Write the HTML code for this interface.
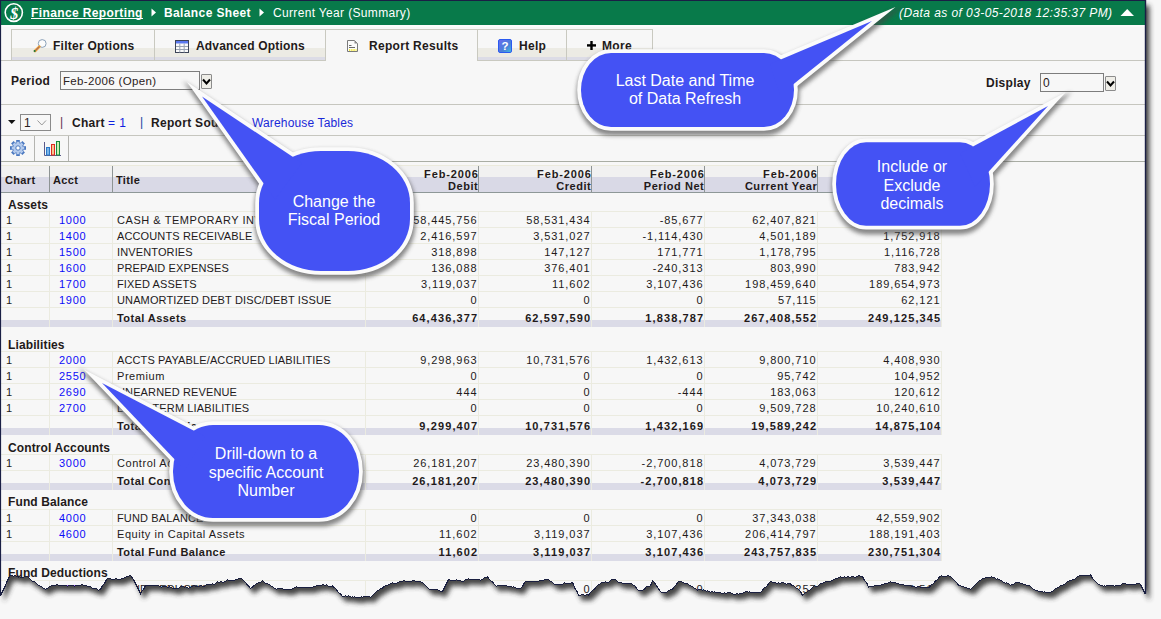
<!DOCTYPE html>
<html><head><meta charset="utf-8">
<style>
*{margin:0;padding:0;box-sizing:border-box}
html,body{width:1161px;height:619px;overflow:hidden;background:#f7f7f7;font-family:"Liberation Sans", sans-serif;color:#231a1a}
.abs{position:absolute}
#page{position:absolute;left:0;top:0;width:1161px;height:619px;clip-path:polygon(0px 0px,1146px 0px,1146px 594px,1145.5px 594.5px,1145.5px 594.5px,1144.5px 592.5px,1143.5px 590.5px,1142.5px 588.5px,1141.5px 586.5px,1140.5px 584.5px,1139.5px 583.5px,1138.5px 583.5px,1137.5px 583.5px,1136.5px 583.5px,1135.5px 584.5px,1134.5px 584.5px,1133.5px 584.5px,1132.5px 584.5px,1131.5px 584.5px,1130.5px 584.5px,1129.5px 584.5px,1128.5px 584.5px,1127.5px 584.5px,1126.5px 584.5px,1125.5px 583.5px,1124.5px 583.5px,1123.5px 583.5px,1122.5px 583.5px,1121.5px 584.5px,1120.5px 585.5px,1119.5px 585.5px,1118.5px 585.5px,1117.5px 585.5px,1116.5px 585.5px,1115.5px 585.5px,1114.5px 586.5px,1113.5px 585.5px,1112.5px 585.5px,1111.5px 585.5px,1110.5px 585.5px,1109.5px 585.5px,1108.5px 585.5px,1107.5px 585.5px,1106.5px 585.5px,1105.5px 586.5px,1104.5px 585.5px,1103.5px 586.5px,1102.5px 585.5px,1101.5px 585.5px,1100.5px 585.5px,1099.5px 584.5px,1098.5px 584.5px,1097.5px 583.5px,1096.5px 582.5px,1095.5px 581.5px,1094.5px 580.5px,1093.5px 579.5px,1092.5px 578.5px,1091.5px 576.5px,1090.5px 574.5px,1089.5px 575.5px,1088.5px 575.5px,1087.5px 575.5px,1086.5px 575.5px,1085.5px 575.5px,1084.5px 575.5px,1083.5px 575.5px,1082.5px 575.5px,1081.5px 575.5px,1080.5px 575.5px,1079.5px 575.5px,1078.5px 576.5px,1077.5px 576.5px,1076.5px 577.5px,1075.5px 578.5px,1074.5px 579.5px,1073.5px 579.5px,1072.5px 579.5px,1071.5px 580.5px,1070.5px 580.5px,1069.5px 580.5px,1068.5px 581.5px,1067.5px 581.5px,1066.5px 582.5px,1065.5px 583.5px,1064.5px 584.5px,1063.5px 584.5px,1062.5px 585.5px,1061.5px 585.5px,1060.5px 585.5px,1059.5px 586.5px,1058.5px 587.5px,1057.5px 587.5px,1056.5px 588.5px,1055.5px 588.5px,1054.5px 589.5px,1053.5px 590.5px,1052.5px 591.5px,1051.5px 591.5px,1050.5px 592.5px,1049.5px 592.5px,1048.5px 592.5px,1047.5px 592.5px,1046.5px 592.5px,1045.5px 592.5px,1044.5px 591.5px,1043.5px 592.5px,1042.5px 591.5px,1041.5px 591.5px,1040.5px 591.5px,1039.5px 591.5px,1038.5px 591.5px,1037.5px 590.5px,1036.5px 590.5px,1035.5px 590.5px,1034.5px 589.5px,1033.5px 589.5px,1032.5px 588.5px,1031.5px 587.5px,1030.5px 586.5px,1029.5px 585.5px,1028.5px 585.5px,1027.5px 585.5px,1026.5px 585.5px,1025.5px 584.5px,1024.5px 584.5px,1023.5px 584.5px,1022.5px 583.5px,1021.5px 583.5px,1020.5px 583.5px,1019.5px 582.5px,1018.5px 582.5px,1017.5px 582.5px,1016.5px 582.5px,1015.5px 582.5px,1014.5px 583.5px,1013.5px 584.5px,1012.5px 584.5px,1011.5px 584.5px,1010.5px 585.5px,1009.5px 584.5px,1008.5px 583.5px,1007.5px 583.5px,1006.5px 582.5px,1005.5px 583.5px,1004.5px 582.5px,1003.5px 582.5px,1002.5px 581.5px,1001.5px 580.5px,1000.5px 580.5px,999.5px 579.5px,998.5px 579.5px,997.5px 578.5px,996.5px 579.5px,995.5px 578.5px,994.5px 577.5px,993.5px 577.5px,992.5px 577.5px,991.5px 576.5px,990.5px 577.5px,989.5px 577.5px,988.5px 577.5px,987.5px 577.5px,986.5px 577.5px,985.5px 577.5px,984.5px 578.5px,983.5px 578.5px,982.5px 578.5px,981.5px 579.5px,980.5px 580.5px,979.5px 580.5px,978.5px 581.5px,977.5px 582.5px,976.5px 583.5px,975.5px 584.5px,974.5px 585.5px,973.5px 586.5px,972.5px 587.5px,971.5px 588.5px,970.5px 589.5px,969.5px 588.5px,968.5px 588.5px,967.5px 588.5px,966.5px 587.5px,965.5px 587.5px,964.5px 587.5px,963.5px 586.5px,962.5px 586.5px,961.5px 586.5px,960.5px 585.5px,959.5px 585.5px,958.5px 585.5px,957.5px 583.5px,956.5px 582.5px,955.5px 581.5px,954.5px 580.5px,953.5px 579.5px,952.5px 578.5px,951.5px 577.5px,950.5px 576.5px,949.5px 576.5px,948.5px 575.5px,947.5px 575.5px,946.5px 576.5px,945.5px 576.5px,944.5px 576.5px,943.5px 576.5px,942.5px 576.5px,941.5px 575.5px,940.5px 576.5px,939.5px 576.5px,938.5px 578.5px,937.5px 579.5px,936.5px 580.5px,935.5px 580.5px,934.5px 582.5px,933.5px 583.5px,932.5px 584.5px,931.5px 584.5px,930.5px 585.5px,929.5px 587.5px,928.5px 587.5px,927.5px 587.5px,926.5px 587.5px,925.5px 587.5px,924.5px 587.5px,923.5px 587.5px,922.5px 587.5px,921.5px 587.5px,920.5px 587.5px,919.5px 586.5px,918.5px 586.5px,917.5px 586.5px,916.5px 587.5px,915.5px 587.5px,914.5px 586.5px,913.5px 586.5px,912.5px 586.5px,911.5px 586.5px,910.5px 585.5px,909.5px 585.5px,908.5px 585.5px,907.5px 585.5px,906.5px 585.5px,905.5px 585.5px,904.5px 585.5px,903.5px 584.5px,902.5px 584.5px,901.5px 584.5px,900.5px 584.5px,899.5px 584.5px,898.5px 583.5px,897.5px 583.5px,896.5px 583.5px,895.5px 582.5px,894.5px 582.5px,893.5px 582.5px,892.5px 582.5px,891.5px 582.5px,890.5px 581.5px,889.5px 582.5px,888.5px 582.5px,887.5px 583.5px,886.5px 583.5px,885.5px 583.5px,884.5px 583.5px,883.5px 584.5px,882.5px 584.5px,881.5px 584.5px,880.5px 585.5px,879.5px 585.5px,878.5px 585.5px,877.5px 585.5px,876.5px 585.5px,875.5px 585.5px,874.5px 585.5px,873.5px 586.5px,872.5px 586.5px,871.5px 586.5px,870.5px 586.5px,869.5px 586.5px,868.5px 587.5px,867.5px 584.5px,866.5px 582.5px,865.5px 581.5px,864.5px 580.5px,863.5px 578.5px,862.5px 576.5px,861.5px 576.5px,860.5px 576.5px,859.5px 575.5px,858.5px 575.5px,857.5px 576.5px,856.5px 576.5px,855.5px 577.5px,854.5px 577.5px,853.5px 576.5px,852.5px 576.5px,851.5px 576.5px,850.5px 577.5px,849.5px 577.5px,848.5px 576.5px,847.5px 576.5px,846.5px 577.5px,845.5px 577.5px,844.5px 576.5px,843.5px 577.5px,842.5px 577.5px,841.5px 577.5px,840.5px 576.5px,839.5px 577.5px,838.5px 577.5px,837.5px 578.5px,836.5px 578.5px,835.5px 578.5px,834.5px 579.5px,833.5px 579.5px,832.5px 580.5px,831.5px 580.5px,830.5px 581.5px,829.5px 581.5px,828.5px 581.5px,827.5px 581.5px,826.5px 581.5px,825.5px 581.5px,824.5px 582.5px,823.5px 582.5px,822.5px 583.5px,821.5px 583.5px,820.5px 583.5px,819.5px 584.5px,818.5px 585.5px,817.5px 586.5px,816.5px 586.5px,815.5px 586.5px,814.5px 585.5px,813.5px 586.5px,812.5px 587.5px,811.5px 588.5px,810.5px 589.5px,809.5px 590.5px,808.5px 590.5px,807.5px 591.5px,806.5px 592.5px,805.5px 592.5px,804.5px 593.5px,803.5px 594.5px,802.5px 595.5px,801.5px 593.5px,800.5px 591.5px,799.5px 590.5px,798.5px 589.5px,797.5px 588.5px,796.5px 588.5px,795.5px 587.5px,794.5px 586.5px,793.5px 585.5px,792.5px 585.5px,791.5px 585.5px,790.5px 583.5px,789.5px 583.5px,788.5px 583.5px,787.5px 583.5px,786.5px 584.5px,785.5px 583.5px,784.5px 583.5px,783.5px 582.5px,782.5px 582.5px,781.5px 582.5px,780.5px 583.5px,779.5px 583.5px,778.5px 582.5px,777.5px 583.5px,776.5px 583.5px,775.5px 582.5px,774.5px 582.5px,773.5px 582.5px,772.5px 582.5px,771.5px 581.5px,770.5px 581.5px,769.5px 582.5px,768.5px 583.5px,767.5px 585.5px,766.5px 586.5px,765.5px 587.5px,764.5px 587.5px,763.5px 588.5px,762.5px 590.5px,761.5px 591.5px,760.5px 592.5px,759.5px 592.5px,758.5px 592.5px,757.5px 592.5px,756.5px 592.5px,755.5px 592.5px,754.5px 592.5px,753.5px 592.5px,752.5px 592.5px,751.5px 592.5px,750.5px 592.5px,749.5px 591.5px,748.5px 592.5px,747.5px 591.5px,746.5px 591.5px,745.5px 591.5px,744.5px 592.5px,743.5px 592.5px,742.5px 593.5px,741.5px 593.5px,740.5px 593.5px,739.5px 593.5px,738.5px 594.5px,737.5px 593.5px,736.5px 593.5px,735.5px 594.5px,734.5px 594.5px,733.5px 594.5px,732.5px 593.5px,731.5px 593.5px,730.5px 592.5px,729.5px 592.5px,728.5px 592.5px,727.5px 592.5px,726.5px 593.5px,725.5px 593.5px,724.5px 592.5px,723.5px 593.5px,722.5px 593.5px,721.5px 593.5px,720.5px 592.5px,719.5px 592.5px,718.5px 592.5px,717.5px 592.5px,716.5px 592.5px,715.5px 592.5px,714.5px 591.5px,713.5px 592.5px,712.5px 591.5px,711.5px 591.5px,710.5px 592.5px,709.5px 591.5px,708.5px 591.5px,707.5px 590.5px,706.5px 591.5px,705.5px 590.5px,704.5px 590.5px,703.5px 589.5px,702.5px 590.5px,701.5px 589.5px,700.5px 589.5px,699.5px 589.5px,698.5px 589.5px,697.5px 590.5px,696.5px 589.5px,695.5px 588.5px,694.5px 588.5px,693.5px 587.5px,692.5px 586.5px,691.5px 586.5px,690.5px 585.5px,689.5px 585.5px,688.5px 584.5px,687.5px 583.5px,686.5px 583.5px,685.5px 583.5px,684.5px 583.5px,683.5px 582.5px,682.5px 582.5px,681.5px 581.5px,680.5px 581.5px,679.5px 581.5px,678.5px 581.5px,677.5px 582.5px,676.5px 584.5px,675.5px 585.5px,674.5px 586.5px,673.5px 587.5px,672.5px 589.5px,671.5px 589.5px,670.5px 589.5px,669.5px 590.5px,668.5px 590.5px,667.5px 591.5px,666.5px 592.5px,665.5px 592.5px,664.5px 592.5px,663.5px 592.5px,662.5px 592.5px,661.5px 592.5px,660.5px 591.5px,659.5px 590.5px,658.5px 588.5px,657.5px 587.5px,656.5px 585.5px,655.5px 584.5px,654.5px 582.5px,653.5px 581.5px,652.5px 580.5px,651.5px 583.5px,650.5px 585.5px,649.5px 586.5px,648.5px 586.5px,647.5px 586.5px,646.5px 586.5px,645.5px 587.5px,644.5px 589.5px,643.5px 589.5px,642.5px 590.5px,641.5px 590.5px,640.5px 590.5px,639.5px 590.5px,638.5px 590.5px,637.5px 589.5px,636.5px 588.5px,635.5px 586.5px,634.5px 585.5px,633.5px 585.5px,632.5px 584.5px,631.5px 583.5px,630.5px 583.5px,629.5px 583.5px,628.5px 583.5px,627.5px 583.5px,626.5px 583.5px,625.5px 583.5px,624.5px 583.5px,623.5px 583.5px,622.5px 583.5px,621.5px 582.5px,620.5px 582.5px,619.5px 582.5px,618.5px 582.5px,617.5px 581.5px,616.5px 580.5px,615.5px 579.5px,614.5px 579.5px,613.5px 579.5px,612.5px 579.5px,611.5px 579.5px,610.5px 580.5px,609.5px 581.5px,608.5px 582.5px,607.5px 582.5px,606.5px 582.5px,605.5px 581.5px,604.5px 582.5px,603.5px 582.5px,602.5px 582.5px,601.5px 582.5px,600.5px 583.5px,599.5px 584.5px,598.5px 584.5px,597.5px 585.5px,596.5px 586.5px,595.5px 587.5px,594.5px 589.5px,593.5px 589.5px,592.5px 590.5px,591.5px 591.5px,590.5px 592.5px,589.5px 593.5px,588.5px 595.5px,587.5px 594.5px,586.5px 594.5px,585.5px 595.5px,584.5px 595.5px,583.5px 594.5px,582.5px 594.5px,581.5px 594.5px,580.5px 595.5px,579.5px 595.5px,578.5px 595.5px,577.5px 592.5px,576.5px 590.5px,575.5px 589.5px,574.5px 587.5px,573.5px 584.5px,572.5px 582.5px,571.5px 582.5px,570.5px 583.5px,569.5px 583.5px,568.5px 583.5px,567.5px 583.5px,566.5px 583.5px,565.5px 583.5px,564.5px 582.5px,563.5px 583.5px,562.5px 584.5px,561.5px 584.5px,560.5px 584.5px,559.5px 584.5px,558.5px 584.5px,557.5px 584.5px,556.5px 584.5px,555.5px 584.5px,554.5px 584.5px,553.5px 583.5px,552.5px 582.5px,551.5px 581.5px,550.5px 581.5px,549.5px 580.5px,548.5px 579.5px,547.5px 579.5px,546.5px 579.5px,545.5px 579.5px,544.5px 579.5px,543.5px 580.5px,542.5px 580.5px,541.5px 580.5px,540.5px 580.5px,539.5px 580.5px,538.5px 581.5px,537.5px 581.5px,536.5px 581.5px,535.5px 581.5px,534.5px 581.5px,533.5px 581.5px,532.5px 581.5px,531.5px 581.5px,530.5px 581.5px,529.5px 581.5px,528.5px 581.5px,527.5px 581.5px,526.5px 581.5px,525.5px 581.5px,524.5px 582.5px,523.5px 584.5px,522.5px 586.5px,521.5px 587.5px,520.5px 588.5px,519.5px 588.5px,518.5px 588.5px,517.5px 588.5px,516.5px 588.5px,515.5px 587.5px,514.5px 587.5px,513.5px 586.5px,512.5px 587.5px,511.5px 586.5px,510.5px 586.5px,509.5px 586.5px,508.5px 586.5px,507.5px 586.5px,506.5px 585.5px,505.5px 585.5px,504.5px 585.5px,503.5px 585.5px,502.5px 585.5px,501.5px 585.5px,500.5px 585.5px,499.5px 585.5px,498.5px 585.5px,497.5px 585.5px,496.5px 586.5px,495.5px 585.5px,494.5px 584.5px,493.5px 583.5px,492.5px 581.5px,491.5px 581.5px,490.5px 580.5px,489.5px 579.5px,488.5px 578.5px,487.5px 576.5px,486.5px 577.5px,485.5px 577.5px,484.5px 577.5px,483.5px 578.5px,482.5px 579.5px,481.5px 579.5px,480.5px 580.5px,479.5px 579.5px,478.5px 579.5px,477.5px 579.5px,476.5px 579.5px,475.5px 579.5px,474.5px 579.5px,473.5px 579.5px,472.5px 579.5px,471.5px 579.5px,470.5px 579.5px,469.5px 579.5px,468.5px 578.5px,467.5px 579.5px,466.5px 579.5px,465.5px 579.5px,464.5px 580.5px,463.5px 581.5px,462.5px 581.5px,461.5px 581.5px,460.5px 580.5px,459.5px 580.5px,458.5px 580.5px,457.5px 580.5px,456.5px 579.5px,455.5px 580.5px,454.5px 580.5px,453.5px 580.5px,452.5px 580.5px,451.5px 580.5px,450.5px 580.5px,449.5px 579.5px,448.5px 579.5px,447.5px 581.5px,446.5px 583.5px,445.5px 585.5px,444.5px 587.5px,443.5px 589.5px,442.5px 591.5px,441.5px 591.5px,440.5px 591.5px,439.5px 590.5px,438.5px 590.5px,437.5px 589.5px,436.5px 589.5px,435.5px 589.5px,434.5px 589.5px,433.5px 589.5px,432.5px 589.5px,431.5px 589.5px,430.5px 589.5px,429.5px 589.5px,428.5px 588.5px,427.5px 587.5px,426.5px 586.5px,425.5px 585.5px,424.5px 584.5px,423.5px 583.5px,422.5px 582.5px,421.5px 582.5px,420.5px 581.5px,419.5px 581.5px,418.5px 581.5px,417.5px 581.5px,416.5px 581.5px,415.5px 581.5px,414.5px 580.5px,413.5px 580.5px,412.5px 580.5px,411.5px 581.5px,410.5px 581.5px,409.5px 581.5px,408.5px 581.5px,407.5px 581.5px,406.5px 581.5px,405.5px 581.5px,404.5px 580.5px,403.5px 580.5px,402.5px 581.5px,401.5px 581.5px,400.5px 581.5px,399.5px 581.5px,398.5px 582.5px,397.5px 582.5px,396.5px 583.5px,395.5px 583.5px,394.5px 583.5px,393.5px 583.5px,392.5px 582.5px,391.5px 583.5px,390.5px 583.5px,389.5px 584.5px,388.5px 584.5px,387.5px 585.5px,386.5px 585.5px,385.5px 585.5px,384.5px 586.5px,383.5px 586.5px,382.5px 588.5px,381.5px 588.5px,380.5px 588.5px,379.5px 589.5px,378.5px 590.5px,377.5px 590.5px,376.5px 591.5px,375.5px 592.5px,374.5px 593.5px,373.5px 594.5px,372.5px 595.5px,371.5px 596.5px,370.5px 597.5px,369.5px 596.5px,368.5px 596.5px,367.5px 596.5px,366.5px 596.5px,365.5px 596.5px,364.5px 596.5px,363.5px 596.5px,362.5px 597.5px,361.5px 596.5px,360.5px 597.5px,359.5px 597.5px,358.5px 597.5px,357.5px 597.5px,356.5px 597.5px,355.5px 597.5px,354.5px 596.5px,353.5px 597.5px,352.5px 596.5px,351.5px 597.5px,350.5px 596.5px,349.5px 596.5px,348.5px 595.5px,347.5px 596.5px,346.5px 596.5px,345.5px 595.5px,344.5px 596.5px,343.5px 596.5px,342.5px 596.5px,341.5px 595.5px,340.5px 593.5px,339.5px 593.5px,338.5px 592.5px,337.5px 591.5px,336.5px 589.5px,335.5px 588.5px,334.5px 587.5px,333.5px 587.5px,332.5px 585.5px,331.5px 586.5px,330.5px 586.5px,329.5px 586.5px,328.5px 586.5px,327.5px 585.5px,326.5px 584.5px,325.5px 585.5px,324.5px 585.5px,323.5px 584.5px,322.5px 584.5px,321.5px 585.5px,320.5px 585.5px,319.5px 585.5px,318.5px 585.5px,317.5px 585.5px,316.5px 585.5px,315.5px 586.5px,314.5px 586.5px,313.5px 586.5px,312.5px 587.5px,311.5px 587.5px,310.5px 587.5px,309.5px 587.5px,308.5px 587.5px,307.5px 587.5px,306.5px 587.5px,305.5px 587.5px,304.5px 587.5px,303.5px 587.5px,302.5px 587.5px,301.5px 587.5px,300.5px 587.5px,299.5px 587.5px,298.5px 587.5px,297.5px 587.5px,296.5px 586.5px,295.5px 587.5px,294.5px 587.5px,293.5px 588.5px,292.5px 588.5px,291.5px 589.5px,290.5px 589.5px,289.5px 589.5px,288.5px 589.5px,287.5px 589.5px,286.5px 589.5px,285.5px 589.5px,284.5px 589.5px,283.5px 589.5px,282.5px 588.5px,281.5px 588.5px,280.5px 588.5px,279.5px 588.5px,278.5px 588.5px,277.5px 588.5px,276.5px 589.5px,275.5px 588.5px,274.5px 588.5px,273.5px 587.5px,272.5px 586.5px,271.5px 586.5px,270.5px 585.5px,269.5px 584.5px,268.5px 584.5px,267.5px 583.5px,266.5px 583.5px,265.5px 583.5px,264.5px 582.5px,263.5px 581.5px,262.5px 580.5px,261.5px 581.5px,260.5px 582.5px,259.5px 582.5px,258.5px 582.5px,257.5px 583.5px,256.5px 583.5px,255.5px 584.5px,254.5px 585.5px,253.5px 585.5px,252.5px 587.5px,251.5px 587.5px,250.5px 588.5px,249.5px 587.5px,248.5px 585.5px,247.5px 585.5px,246.5px 583.5px,245.5px 582.5px,244.5px 581.5px,243.5px 580.5px,242.5px 579.5px,241.5px 578.5px,240.5px 578.5px,239.5px 578.5px,238.5px 578.5px,237.5px 579.5px,236.5px 579.5px,235.5px 579.5px,234.5px 580.5px,233.5px 580.5px,232.5px 580.5px,231.5px 580.5px,230.5px 580.5px,229.5px 580.5px,228.5px 580.5px,227.5px 579.5px,226.5px 580.5px,225.5px 581.5px,224.5px 581.5px,223.5px 582.5px,222.5px 582.5px,221.5px 581.5px,220.5px 581.5px,219.5px 582.5px,218.5px 582.5px,217.5px 581.5px,216.5px 582.5px,215.5px 583.5px,214.5px 584.5px,213.5px 584.5px,212.5px 583.5px,211.5px 584.5px,210.5px 584.5px,209.5px 584.5px,208.5px 584.5px,207.5px 584.5px,206.5px 584.5px,205.5px 585.5px,204.5px 586.5px,203.5px 586.5px,202.5px 586.5px,201.5px 585.5px,200.5px 585.5px,199.5px 586.5px,198.5px 586.5px,197.5px 586.5px,196.5px 586.5px,195.5px 586.5px,194.5px 585.5px,193.5px 585.5px,192.5px 586.5px,191.5px 586.5px,190.5px 587.5px,189.5px 587.5px,188.5px 588.5px,187.5px 587.5px,186.5px 587.5px,185.5px 586.5px,184.5px 587.5px,183.5px 586.5px,182.5px 586.5px,181.5px 586.5px,180.5px 586.5px,179.5px 587.5px,178.5px 588.5px,177.5px 588.5px,176.5px 588.5px,175.5px 588.5px,174.5px 588.5px,173.5px 588.5px,172.5px 588.5px,171.5px 587.5px,170.5px 587.5px,169.5px 586.5px,168.5px 587.5px,167.5px 587.5px,166.5px 586.5px,165.5px 586.5px,164.5px 586.5px,163.5px 586.5px,162.5px 586.5px,161.5px 587.5px,160.5px 586.5px,159.5px 586.5px,158.5px 585.5px,157.5px 585.5px,156.5px 585.5px,155.5px 585.5px,154.5px 585.5px,153.5px 585.5px,152.5px 585.5px,151.5px 585.5px,150.5px 585.5px,149.5px 585.5px,148.5px 585.5px,147.5px 585.5px,146.5px 585.5px,145.5px 585.5px,144.5px 587.5px,143.5px 589.5px,142.5px 590.5px,141.5px 591.5px,140.5px 593.5px,139.5px 591.5px,138.5px 589.5px,137.5px 587.5px,136.5px 585.5px,135.5px 583.5px,134.5px 581.5px,133.5px 579.5px,132.5px 578.5px,131.5px 576.5px,130.5px 575.5px,129.5px 575.5px,128.5px 576.5px,127.5px 576.5px,126.5px 576.5px,125.5px 577.5px,124.5px 577.5px,123.5px 578.5px,122.5px 578.5px,121.5px 578.5px,120.5px 579.5px,119.5px 579.5px,118.5px 579.5px,117.5px 579.5px,116.5px 578.5px,115.5px 578.5px,114.5px 579.5px,113.5px 579.5px,112.5px 579.5px,111.5px 579.5px,110.5px 578.5px,109.5px 578.5px,108.5px 578.5px,107.5px 578.5px,106.5px 579.5px,105.5px 581.5px,104.5px 583.5px,103.5px 584.5px,102.5px 585.5px,101.5px 587.5px,100.5px 589.5px,99.5px 589.5px,98.5px 590.5px,97.5px 589.5px,96.5px 588.5px,95.5px 588.5px,94.5px 588.5px,93.5px 588.5px,92.5px 588.5px,91.5px 587.5px,90.5px 586.5px,89.5px 586.5px,88.5px 586.5px,87.5px 586.5px,86.5px 585.5px,85.5px 585.5px,84.5px 585.5px,83.5px 585.5px,82.5px 584.5px,81.5px 584.5px,80.5px 585.5px,79.5px 585.5px,78.5px 585.5px,77.5px 585.5px,76.5px 585.5px,75.5px 585.5px,74.5px 586.5px,73.5px 585.5px,72.5px 585.5px,71.5px 585.5px,70.5px 585.5px,69.5px 585.5px,68.5px 585.5px,67.5px 586.5px,66.5px 585.5px,65.5px 585.5px,64.5px 585.5px,63.5px 585.5px,62.5px 585.5px,61.5px 585.5px,60.5px 585.5px,59.5px 585.5px,58.5px 585.5px,57.5px 584.5px,56.5px 584.5px,55.5px 585.5px,54.5px 585.5px,53.5px 585.5px,52.5px 585.5px,51.5px 585.5px,50.5px 586.5px,49.5px 586.5px,48.5px 587.5px,47.5px 588.5px,46.5px 588.5px,45.5px 589.5px,44.5px 588.5px,43.5px 588.5px,42.5px 587.5px,41.5px 586.5px,40.5px 586.5px,39.5px 585.5px,38.5px 585.5px,37.5px 584.5px,36.5px 583.5px,35.5px 582.5px,34.5px 581.5px,33.5px 581.5px,32.5px 581.5px,31.5px 580.5px,30.5px 579.5px,29.5px 578.5px,28.5px 577.5px,27.5px 576.5px,26.5px 576.5px,25.5px 576.5px,24.5px 576.5px,23.5px 577.5px,22.5px 577.5px,21.5px 577.5px,20.5px 577.5px,19.5px 576.5px,18.5px 577.5px,17.5px 576.5px,16.5px 576.5px,15.5px 575.5px,14.5px 575.5px,13.5px 576.5px,12.5px 575.5px,11.5px 575.5px,10.5px 575.5px,9.5px 576.5px,8.5px 578.5px,7.5px 580.5px,6.5px 582.5px,5.5px 585.5px,4.5px 587.5px,3.5px 589.5px,2.5px 591.5px,1.5px 593.5px,0.5px 596.5px);background:#f7f7f7}
.t{position:absolute;white-space:nowrap;line-height:1}
.b{font-weight:bold}
.hl{position:absolute;height:1px}
.vl{position:absolute;width:1px}
.num{text-align:right}
</style></head><body>
<svg class="abs" style="left:0;top:0" width="1161" height="619">
<defs><filter id="pshadow" x="-5%" y="-5%" width="110%" height="110%"><feGaussianBlur stdDeviation="2.6"/></filter></defs>
<polygon points="0,0 1146,0 1146,594 1145.5,594.5 1145.5,594.5 1144.5,592.5 1143.5,590.5 1142.5,588.5 1141.5,586.5 1140.5,584.5 1139.5,583.5 1138.5,583.5 1137.5,583.5 1136.5,583.5 1135.5,584.5 1134.5,584.5 1133.5,584.5 1132.5,584.5 1131.5,584.5 1130.5,584.5 1129.5,584.5 1128.5,584.5 1127.5,584.5 1126.5,584.5 1125.5,583.5 1124.5,583.5 1123.5,583.5 1122.5,583.5 1121.5,584.5 1120.5,585.5 1119.5,585.5 1118.5,585.5 1117.5,585.5 1116.5,585.5 1115.5,585.5 1114.5,586.5 1113.5,585.5 1112.5,585.5 1111.5,585.5 1110.5,585.5 1109.5,585.5 1108.5,585.5 1107.5,585.5 1106.5,585.5 1105.5,586.5 1104.5,585.5 1103.5,586.5 1102.5,585.5 1101.5,585.5 1100.5,585.5 1099.5,584.5 1098.5,584.5 1097.5,583.5 1096.5,582.5 1095.5,581.5 1094.5,580.5 1093.5,579.5 1092.5,578.5 1091.5,576.5 1090.5,574.5 1089.5,575.5 1088.5,575.5 1087.5,575.5 1086.5,575.5 1085.5,575.5 1084.5,575.5 1083.5,575.5 1082.5,575.5 1081.5,575.5 1080.5,575.5 1079.5,575.5 1078.5,576.5 1077.5,576.5 1076.5,577.5 1075.5,578.5 1074.5,579.5 1073.5,579.5 1072.5,579.5 1071.5,580.5 1070.5,580.5 1069.5,580.5 1068.5,581.5 1067.5,581.5 1066.5,582.5 1065.5,583.5 1064.5,584.5 1063.5,584.5 1062.5,585.5 1061.5,585.5 1060.5,585.5 1059.5,586.5 1058.5,587.5 1057.5,587.5 1056.5,588.5 1055.5,588.5 1054.5,589.5 1053.5,590.5 1052.5,591.5 1051.5,591.5 1050.5,592.5 1049.5,592.5 1048.5,592.5 1047.5,592.5 1046.5,592.5 1045.5,592.5 1044.5,591.5 1043.5,592.5 1042.5,591.5 1041.5,591.5 1040.5,591.5 1039.5,591.5 1038.5,591.5 1037.5,590.5 1036.5,590.5 1035.5,590.5 1034.5,589.5 1033.5,589.5 1032.5,588.5 1031.5,587.5 1030.5,586.5 1029.5,585.5 1028.5,585.5 1027.5,585.5 1026.5,585.5 1025.5,584.5 1024.5,584.5 1023.5,584.5 1022.5,583.5 1021.5,583.5 1020.5,583.5 1019.5,582.5 1018.5,582.5 1017.5,582.5 1016.5,582.5 1015.5,582.5 1014.5,583.5 1013.5,584.5 1012.5,584.5 1011.5,584.5 1010.5,585.5 1009.5,584.5 1008.5,583.5 1007.5,583.5 1006.5,582.5 1005.5,583.5 1004.5,582.5 1003.5,582.5 1002.5,581.5 1001.5,580.5 1000.5,580.5 999.5,579.5 998.5,579.5 997.5,578.5 996.5,579.5 995.5,578.5 994.5,577.5 993.5,577.5 992.5,577.5 991.5,576.5 990.5,577.5 989.5,577.5 988.5,577.5 987.5,577.5 986.5,577.5 985.5,577.5 984.5,578.5 983.5,578.5 982.5,578.5 981.5,579.5 980.5,580.5 979.5,580.5 978.5,581.5 977.5,582.5 976.5,583.5 975.5,584.5 974.5,585.5 973.5,586.5 972.5,587.5 971.5,588.5 970.5,589.5 969.5,588.5 968.5,588.5 967.5,588.5 966.5,587.5 965.5,587.5 964.5,587.5 963.5,586.5 962.5,586.5 961.5,586.5 960.5,585.5 959.5,585.5 958.5,585.5 957.5,583.5 956.5,582.5 955.5,581.5 954.5,580.5 953.5,579.5 952.5,578.5 951.5,577.5 950.5,576.5 949.5,576.5 948.5,575.5 947.5,575.5 946.5,576.5 945.5,576.5 944.5,576.5 943.5,576.5 942.5,576.5 941.5,575.5 940.5,576.5 939.5,576.5 938.5,578.5 937.5,579.5 936.5,580.5 935.5,580.5 934.5,582.5 933.5,583.5 932.5,584.5 931.5,584.5 930.5,585.5 929.5,587.5 928.5,587.5 927.5,587.5 926.5,587.5 925.5,587.5 924.5,587.5 923.5,587.5 922.5,587.5 921.5,587.5 920.5,587.5 919.5,586.5 918.5,586.5 917.5,586.5 916.5,587.5 915.5,587.5 914.5,586.5 913.5,586.5 912.5,586.5 911.5,586.5 910.5,585.5 909.5,585.5 908.5,585.5 907.5,585.5 906.5,585.5 905.5,585.5 904.5,585.5 903.5,584.5 902.5,584.5 901.5,584.5 900.5,584.5 899.5,584.5 898.5,583.5 897.5,583.5 896.5,583.5 895.5,582.5 894.5,582.5 893.5,582.5 892.5,582.5 891.5,582.5 890.5,581.5 889.5,582.5 888.5,582.5 887.5,583.5 886.5,583.5 885.5,583.5 884.5,583.5 883.5,584.5 882.5,584.5 881.5,584.5 880.5,585.5 879.5,585.5 878.5,585.5 877.5,585.5 876.5,585.5 875.5,585.5 874.5,585.5 873.5,586.5 872.5,586.5 871.5,586.5 870.5,586.5 869.5,586.5 868.5,587.5 867.5,584.5 866.5,582.5 865.5,581.5 864.5,580.5 863.5,578.5 862.5,576.5 861.5,576.5 860.5,576.5 859.5,575.5 858.5,575.5 857.5,576.5 856.5,576.5 855.5,577.5 854.5,577.5 853.5,576.5 852.5,576.5 851.5,576.5 850.5,577.5 849.5,577.5 848.5,576.5 847.5,576.5 846.5,577.5 845.5,577.5 844.5,576.5 843.5,577.5 842.5,577.5 841.5,577.5 840.5,576.5 839.5,577.5 838.5,577.5 837.5,578.5 836.5,578.5 835.5,578.5 834.5,579.5 833.5,579.5 832.5,580.5 831.5,580.5 830.5,581.5 829.5,581.5 828.5,581.5 827.5,581.5 826.5,581.5 825.5,581.5 824.5,582.5 823.5,582.5 822.5,583.5 821.5,583.5 820.5,583.5 819.5,584.5 818.5,585.5 817.5,586.5 816.5,586.5 815.5,586.5 814.5,585.5 813.5,586.5 812.5,587.5 811.5,588.5 810.5,589.5 809.5,590.5 808.5,590.5 807.5,591.5 806.5,592.5 805.5,592.5 804.5,593.5 803.5,594.5 802.5,595.5 801.5,593.5 800.5,591.5 799.5,590.5 798.5,589.5 797.5,588.5 796.5,588.5 795.5,587.5 794.5,586.5 793.5,585.5 792.5,585.5 791.5,585.5 790.5,583.5 789.5,583.5 788.5,583.5 787.5,583.5 786.5,584.5 785.5,583.5 784.5,583.5 783.5,582.5 782.5,582.5 781.5,582.5 780.5,583.5 779.5,583.5 778.5,582.5 777.5,583.5 776.5,583.5 775.5,582.5 774.5,582.5 773.5,582.5 772.5,582.5 771.5,581.5 770.5,581.5 769.5,582.5 768.5,583.5 767.5,585.5 766.5,586.5 765.5,587.5 764.5,587.5 763.5,588.5 762.5,590.5 761.5,591.5 760.5,592.5 759.5,592.5 758.5,592.5 757.5,592.5 756.5,592.5 755.5,592.5 754.5,592.5 753.5,592.5 752.5,592.5 751.5,592.5 750.5,592.5 749.5,591.5 748.5,592.5 747.5,591.5 746.5,591.5 745.5,591.5 744.5,592.5 743.5,592.5 742.5,593.5 741.5,593.5 740.5,593.5 739.5,593.5 738.5,594.5 737.5,593.5 736.5,593.5 735.5,594.5 734.5,594.5 733.5,594.5 732.5,593.5 731.5,593.5 730.5,592.5 729.5,592.5 728.5,592.5 727.5,592.5 726.5,593.5 725.5,593.5 724.5,592.5 723.5,593.5 722.5,593.5 721.5,593.5 720.5,592.5 719.5,592.5 718.5,592.5 717.5,592.5 716.5,592.5 715.5,592.5 714.5,591.5 713.5,592.5 712.5,591.5 711.5,591.5 710.5,592.5 709.5,591.5 708.5,591.5 707.5,590.5 706.5,591.5 705.5,590.5 704.5,590.5 703.5,589.5 702.5,590.5 701.5,589.5 700.5,589.5 699.5,589.5 698.5,589.5 697.5,590.5 696.5,589.5 695.5,588.5 694.5,588.5 693.5,587.5 692.5,586.5 691.5,586.5 690.5,585.5 689.5,585.5 688.5,584.5 687.5,583.5 686.5,583.5 685.5,583.5 684.5,583.5 683.5,582.5 682.5,582.5 681.5,581.5 680.5,581.5 679.5,581.5 678.5,581.5 677.5,582.5 676.5,584.5 675.5,585.5 674.5,586.5 673.5,587.5 672.5,589.5 671.5,589.5 670.5,589.5 669.5,590.5 668.5,590.5 667.5,591.5 666.5,592.5 665.5,592.5 664.5,592.5 663.5,592.5 662.5,592.5 661.5,592.5 660.5,591.5 659.5,590.5 658.5,588.5 657.5,587.5 656.5,585.5 655.5,584.5 654.5,582.5 653.5,581.5 652.5,580.5 651.5,583.5 650.5,585.5 649.5,586.5 648.5,586.5 647.5,586.5 646.5,586.5 645.5,587.5 644.5,589.5 643.5,589.5 642.5,590.5 641.5,590.5 640.5,590.5 639.5,590.5 638.5,590.5 637.5,589.5 636.5,588.5 635.5,586.5 634.5,585.5 633.5,585.5 632.5,584.5 631.5,583.5 630.5,583.5 629.5,583.5 628.5,583.5 627.5,583.5 626.5,583.5 625.5,583.5 624.5,583.5 623.5,583.5 622.5,583.5 621.5,582.5 620.5,582.5 619.5,582.5 618.5,582.5 617.5,581.5 616.5,580.5 615.5,579.5 614.5,579.5 613.5,579.5 612.5,579.5 611.5,579.5 610.5,580.5 609.5,581.5 608.5,582.5 607.5,582.5 606.5,582.5 605.5,581.5 604.5,582.5 603.5,582.5 602.5,582.5 601.5,582.5 600.5,583.5 599.5,584.5 598.5,584.5 597.5,585.5 596.5,586.5 595.5,587.5 594.5,589.5 593.5,589.5 592.5,590.5 591.5,591.5 590.5,592.5 589.5,593.5 588.5,595.5 587.5,594.5 586.5,594.5 585.5,595.5 584.5,595.5 583.5,594.5 582.5,594.5 581.5,594.5 580.5,595.5 579.5,595.5 578.5,595.5 577.5,592.5 576.5,590.5 575.5,589.5 574.5,587.5 573.5,584.5 572.5,582.5 571.5,582.5 570.5,583.5 569.5,583.5 568.5,583.5 567.5,583.5 566.5,583.5 565.5,583.5 564.5,582.5 563.5,583.5 562.5,584.5 561.5,584.5 560.5,584.5 559.5,584.5 558.5,584.5 557.5,584.5 556.5,584.5 555.5,584.5 554.5,584.5 553.5,583.5 552.5,582.5 551.5,581.5 550.5,581.5 549.5,580.5 548.5,579.5 547.5,579.5 546.5,579.5 545.5,579.5 544.5,579.5 543.5,580.5 542.5,580.5 541.5,580.5 540.5,580.5 539.5,580.5 538.5,581.5 537.5,581.5 536.5,581.5 535.5,581.5 534.5,581.5 533.5,581.5 532.5,581.5 531.5,581.5 530.5,581.5 529.5,581.5 528.5,581.5 527.5,581.5 526.5,581.5 525.5,581.5 524.5,582.5 523.5,584.5 522.5,586.5 521.5,587.5 520.5,588.5 519.5,588.5 518.5,588.5 517.5,588.5 516.5,588.5 515.5,587.5 514.5,587.5 513.5,586.5 512.5,587.5 511.5,586.5 510.5,586.5 509.5,586.5 508.5,586.5 507.5,586.5 506.5,585.5 505.5,585.5 504.5,585.5 503.5,585.5 502.5,585.5 501.5,585.5 500.5,585.5 499.5,585.5 498.5,585.5 497.5,585.5 496.5,586.5 495.5,585.5 494.5,584.5 493.5,583.5 492.5,581.5 491.5,581.5 490.5,580.5 489.5,579.5 488.5,578.5 487.5,576.5 486.5,577.5 485.5,577.5 484.5,577.5 483.5,578.5 482.5,579.5 481.5,579.5 480.5,580.5 479.5,579.5 478.5,579.5 477.5,579.5 476.5,579.5 475.5,579.5 474.5,579.5 473.5,579.5 472.5,579.5 471.5,579.5 470.5,579.5 469.5,579.5 468.5,578.5 467.5,579.5 466.5,579.5 465.5,579.5 464.5,580.5 463.5,581.5 462.5,581.5 461.5,581.5 460.5,580.5 459.5,580.5 458.5,580.5 457.5,580.5 456.5,579.5 455.5,580.5 454.5,580.5 453.5,580.5 452.5,580.5 451.5,580.5 450.5,580.5 449.5,579.5 448.5,579.5 447.5,581.5 446.5,583.5 445.5,585.5 444.5,587.5 443.5,589.5 442.5,591.5 441.5,591.5 440.5,591.5 439.5,590.5 438.5,590.5 437.5,589.5 436.5,589.5 435.5,589.5 434.5,589.5 433.5,589.5 432.5,589.5 431.5,589.5 430.5,589.5 429.5,589.5 428.5,588.5 427.5,587.5 426.5,586.5 425.5,585.5 424.5,584.5 423.5,583.5 422.5,582.5 421.5,582.5 420.5,581.5 419.5,581.5 418.5,581.5 417.5,581.5 416.5,581.5 415.5,581.5 414.5,580.5 413.5,580.5 412.5,580.5 411.5,581.5 410.5,581.5 409.5,581.5 408.5,581.5 407.5,581.5 406.5,581.5 405.5,581.5 404.5,580.5 403.5,580.5 402.5,581.5 401.5,581.5 400.5,581.5 399.5,581.5 398.5,582.5 397.5,582.5 396.5,583.5 395.5,583.5 394.5,583.5 393.5,583.5 392.5,582.5 391.5,583.5 390.5,583.5 389.5,584.5 388.5,584.5 387.5,585.5 386.5,585.5 385.5,585.5 384.5,586.5 383.5,586.5 382.5,588.5 381.5,588.5 380.5,588.5 379.5,589.5 378.5,590.5 377.5,590.5 376.5,591.5 375.5,592.5 374.5,593.5 373.5,594.5 372.5,595.5 371.5,596.5 370.5,597.5 369.5,596.5 368.5,596.5 367.5,596.5 366.5,596.5 365.5,596.5 364.5,596.5 363.5,596.5 362.5,597.5 361.5,596.5 360.5,597.5 359.5,597.5 358.5,597.5 357.5,597.5 356.5,597.5 355.5,597.5 354.5,596.5 353.5,597.5 352.5,596.5 351.5,597.5 350.5,596.5 349.5,596.5 348.5,595.5 347.5,596.5 346.5,596.5 345.5,595.5 344.5,596.5 343.5,596.5 342.5,596.5 341.5,595.5 340.5,593.5 339.5,593.5 338.5,592.5 337.5,591.5 336.5,589.5 335.5,588.5 334.5,587.5 333.5,587.5 332.5,585.5 331.5,586.5 330.5,586.5 329.5,586.5 328.5,586.5 327.5,585.5 326.5,584.5 325.5,585.5 324.5,585.5 323.5,584.5 322.5,584.5 321.5,585.5 320.5,585.5 319.5,585.5 318.5,585.5 317.5,585.5 316.5,585.5 315.5,586.5 314.5,586.5 313.5,586.5 312.5,587.5 311.5,587.5 310.5,587.5 309.5,587.5 308.5,587.5 307.5,587.5 306.5,587.5 305.5,587.5 304.5,587.5 303.5,587.5 302.5,587.5 301.5,587.5 300.5,587.5 299.5,587.5 298.5,587.5 297.5,587.5 296.5,586.5 295.5,587.5 294.5,587.5 293.5,588.5 292.5,588.5 291.5,589.5 290.5,589.5 289.5,589.5 288.5,589.5 287.5,589.5 286.5,589.5 285.5,589.5 284.5,589.5 283.5,589.5 282.5,588.5 281.5,588.5 280.5,588.5 279.5,588.5 278.5,588.5 277.5,588.5 276.5,589.5 275.5,588.5 274.5,588.5 273.5,587.5 272.5,586.5 271.5,586.5 270.5,585.5 269.5,584.5 268.5,584.5 267.5,583.5 266.5,583.5 265.5,583.5 264.5,582.5 263.5,581.5 262.5,580.5 261.5,581.5 260.5,582.5 259.5,582.5 258.5,582.5 257.5,583.5 256.5,583.5 255.5,584.5 254.5,585.5 253.5,585.5 252.5,587.5 251.5,587.5 250.5,588.5 249.5,587.5 248.5,585.5 247.5,585.5 246.5,583.5 245.5,582.5 244.5,581.5 243.5,580.5 242.5,579.5 241.5,578.5 240.5,578.5 239.5,578.5 238.5,578.5 237.5,579.5 236.5,579.5 235.5,579.5 234.5,580.5 233.5,580.5 232.5,580.5 231.5,580.5 230.5,580.5 229.5,580.5 228.5,580.5 227.5,579.5 226.5,580.5 225.5,581.5 224.5,581.5 223.5,582.5 222.5,582.5 221.5,581.5 220.5,581.5 219.5,582.5 218.5,582.5 217.5,581.5 216.5,582.5 215.5,583.5 214.5,584.5 213.5,584.5 212.5,583.5 211.5,584.5 210.5,584.5 209.5,584.5 208.5,584.5 207.5,584.5 206.5,584.5 205.5,585.5 204.5,586.5 203.5,586.5 202.5,586.5 201.5,585.5 200.5,585.5 199.5,586.5 198.5,586.5 197.5,586.5 196.5,586.5 195.5,586.5 194.5,585.5 193.5,585.5 192.5,586.5 191.5,586.5 190.5,587.5 189.5,587.5 188.5,588.5 187.5,587.5 186.5,587.5 185.5,586.5 184.5,587.5 183.5,586.5 182.5,586.5 181.5,586.5 180.5,586.5 179.5,587.5 178.5,588.5 177.5,588.5 176.5,588.5 175.5,588.5 174.5,588.5 173.5,588.5 172.5,588.5 171.5,587.5 170.5,587.5 169.5,586.5 168.5,587.5 167.5,587.5 166.5,586.5 165.5,586.5 164.5,586.5 163.5,586.5 162.5,586.5 161.5,587.5 160.5,586.5 159.5,586.5 158.5,585.5 157.5,585.5 156.5,585.5 155.5,585.5 154.5,585.5 153.5,585.5 152.5,585.5 151.5,585.5 150.5,585.5 149.5,585.5 148.5,585.5 147.5,585.5 146.5,585.5 145.5,585.5 144.5,587.5 143.5,589.5 142.5,590.5 141.5,591.5 140.5,593.5 139.5,591.5 138.5,589.5 137.5,587.5 136.5,585.5 135.5,583.5 134.5,581.5 133.5,579.5 132.5,578.5 131.5,576.5 130.5,575.5 129.5,575.5 128.5,576.5 127.5,576.5 126.5,576.5 125.5,577.5 124.5,577.5 123.5,578.5 122.5,578.5 121.5,578.5 120.5,579.5 119.5,579.5 118.5,579.5 117.5,579.5 116.5,578.5 115.5,578.5 114.5,579.5 113.5,579.5 112.5,579.5 111.5,579.5 110.5,578.5 109.5,578.5 108.5,578.5 107.5,578.5 106.5,579.5 105.5,581.5 104.5,583.5 103.5,584.5 102.5,585.5 101.5,587.5 100.5,589.5 99.5,589.5 98.5,590.5 97.5,589.5 96.5,588.5 95.5,588.5 94.5,588.5 93.5,588.5 92.5,588.5 91.5,587.5 90.5,586.5 89.5,586.5 88.5,586.5 87.5,586.5 86.5,585.5 85.5,585.5 84.5,585.5 83.5,585.5 82.5,584.5 81.5,584.5 80.5,585.5 79.5,585.5 78.5,585.5 77.5,585.5 76.5,585.5 75.5,585.5 74.5,586.5 73.5,585.5 72.5,585.5 71.5,585.5 70.5,585.5 69.5,585.5 68.5,585.5 67.5,586.5 66.5,585.5 65.5,585.5 64.5,585.5 63.5,585.5 62.5,585.5 61.5,585.5 60.5,585.5 59.5,585.5 58.5,585.5 57.5,584.5 56.5,584.5 55.5,585.5 54.5,585.5 53.5,585.5 52.5,585.5 51.5,585.5 50.5,586.5 49.5,586.5 48.5,587.5 47.5,588.5 46.5,588.5 45.5,589.5 44.5,588.5 43.5,588.5 42.5,587.5 41.5,586.5 40.5,586.5 39.5,585.5 38.5,585.5 37.5,584.5 36.5,583.5 35.5,582.5 34.5,581.5 33.5,581.5 32.5,581.5 31.5,580.5 30.5,579.5 29.5,578.5 28.5,577.5 27.5,576.5 26.5,576.5 25.5,576.5 24.5,576.5 23.5,577.5 22.5,577.5 21.5,577.5 20.5,577.5 19.5,576.5 18.5,577.5 17.5,576.5 16.5,576.5 15.5,575.5 14.5,575.5 13.5,576.5 12.5,575.5 11.5,575.5 10.5,575.5 9.5,576.5 8.5,578.5 7.5,580.5 6.5,582.5 5.5,585.5 4.5,587.5 3.5,589.5 2.5,591.5 1.5,593.5 0.5,596.5" fill="#303030" opacity="0.9" transform="translate(3.5,5.5)" filter="url(#pshadow)"/>
</svg>
<div id="page">

<div class="abs" style="left:0;top:0;width:1146px;height:25px;background:#087a4a"></div>
<div class="abs" style="left:0;top:25px;width:1146px;height:2px;background:#fbfbfb"></div>
<svg class="abs" style="left:3px;top:2px" width="22" height="22" viewBox="0 0 22 22">
<ellipse cx="10.8" cy="10.6" rx="8.6" ry="8.8" fill="none" stroke="#fff" stroke-width="1.6"/>
<text x="11.2" y="16.5" font-family="Liberation Serif" font-weight="bold" font-style="italic" font-size="16" fill="#fff" text-anchor="middle">$</text>
</svg>
<div class="t b" style="left:31px;top:7px;font-size:12px;color:#fff;letter-spacing:0.38px">Finance Reporting</div>
<div class="abs" style="left:31px;top:18px;width:112px;height:1px;background:#fff"></div>
<svg class="abs" style="left:151px;top:8px" width="6" height="9"><polygon points="0.5,0.5 5,4.5 0.5,8.5" fill="#fff"/></svg>
<div class="t b" style="left:164px;top:7px;font-size:12px;color:#fff;letter-spacing:0.38px">Balance Sheet</div>
<svg class="abs" style="left:259px;top:8px" width="6" height="9"><polygon points="0.5,0.5 5,4.5 0.5,8.5" fill="#fff"/></svg>
<div class="t" style="left:273px;top:7px;font-size:12px;color:#fff;letter-spacing:0.34px">Current Year (Summary)</div>
<div class="t" style="left:899px;top:7px;font-size:12px;color:#fff;font-style:italic;letter-spacing:0.42px">(Data as of 03-05-2018 12:35:37 PM)</div>
<svg class="abs" style="left:1120px;top:8px" width="15" height="9"><polygon points="0.5,8 7.2,1 14,8" fill="#fff"/></svg>

<div class="hl" style="left:0;top:60px;width:1146px;background:#c6c6bf"></div>
<div class="abs" style="left:11px;top:29px;width:144px;height:32px;border:1px solid #c9c9c0;background:linear-gradient(#f7f7f7 0,#f7f7f7 18px,#ecebe4 18px,#ecebe4 27px,#dcdce6 27px,#dcdce6 30px)"></div>
<div class="abs" style="left:154px;top:29px;width:172px;height:32px;border:1px solid #c9c9c0;background:linear-gradient(#f7f7f7 0,#f7f7f7 18px,#ecebe4 18px,#ecebe4 27px,#dcdce6 27px,#dcdce6 30px)"></div>
<div class="abs" style="left:325px;top:29px;width:153px;height:32px;border:1px solid #c9c9c0;border-bottom:none;background:#f7f7f7"></div>
<div class="abs" style="left:477px;top:29px;width:90px;height:32px;border:1px solid #c9c9c0;background:linear-gradient(#f7f7f7 0,#f7f7f7 18px,#ecebe4 18px,#ecebe4 27px,#dcdce6 27px,#dcdce6 30px)"></div>
<div class="abs" style="left:566px;top:29px;width:87px;height:32px;border:1px solid #c9c9c0;background:linear-gradient(#f7f7f7 0,#f7f7f7 18px,#ecebe4 18px,#ecebe4 27px,#dcdce6 27px,#dcdce6 30px)"></div>
<svg class="abs" style="left:32px;top:37px" width="16" height="16" viewBox="0 0 16 16">
<circle cx="10.2" cy="6.5" r="3.9" fill="#fcfcfc" stroke="#8aa0b8" stroke-width="1"/>
<line x1="7.4" y1="9.6" x2="3" y2="14" stroke="#e89a30" stroke-width="2.6" stroke-linecap="round"/>
<line x1="7.2" y1="9.8" x2="3.5" y2="13.5" stroke="#8a5a8a" stroke-width="0.8"/>
<circle cx="2.6" cy="14.1" r="1" fill="#1a7a3a"/>
</svg>
<div class="t b" style="left:53px;top:40px;font-size:12px;letter-spacing:0.25px">Filter Options</div>
<svg class="abs" style="left:175px;top:40px" width="14" height="13" viewBox="0 0 14 13">
<rect x="0.5" y="0.5" width="13" height="12" fill="#fafafa" stroke="#3c4458"/>
<rect x="1" y="1" width="12" height="2.5" fill="#5a78f0"/>
<path d="M1 6.5H13M1 9.5H13M4.8 3.5V12.5M9.2 3.5V12.5" stroke="#9aa4b4" stroke-width="1"/>
</svg>
<div class="t b" style="left:196px;top:40px;font-size:12px;letter-spacing:0.17px">Advanced Options</div>
<svg class="abs" style="left:347px;top:40px" width="11" height="12" viewBox="0 0 11 12">
<path d="M0.5 0.5H7.5L10.5 3.5V11.5H0.5Z" fill="#fbfbfb" stroke="#7a7a7a"/>
<path d="M7.5 0.5V3.5H10.5Z" fill="#8a8a8a"/>
<path d="M2 5.5H4.5M2 7.5H8" stroke="#6a6a6a" stroke-width="1"/>
<path d="M2 10H9.5" stroke="#f6e800" stroke-width="1.6" stroke-dasharray="1.3 0.9"/>
</svg>
<div class="t b" style="left:369px;top:40px;font-size:12px;letter-spacing:0.3px">Report Results</div>
<svg class="abs" style="left:498px;top:39px" width="14" height="14" viewBox="0 0 14 14">
<defs><linearGradient id="hg" x1="0" y1="0" x2="1" y2="1"><stop offset="0" stop-color="#6a6af0"/><stop offset="0.6" stop-color="#4a80d8"/><stop offset="1" stop-color="#40c0e0"/></linearGradient></defs>
<rect x="0.5" y="0.5" width="13" height="13" rx="1.5" fill="url(#hg)" stroke="#2a5af0"/>
<text x="7" y="11.2" font-family="Liberation Sans" font-weight="bold" font-size="11.5" fill="#fff" text-anchor="middle">?</text>
</svg>
<div class="t b" style="left:519px;top:40px;font-size:12px;letter-spacing:0.3px">Help</div>
<svg class="abs" style="left:587px;top:41px" width="9" height="9"><rect x="0" y="3.2" width="9" height="2.4" fill="#000"/><rect x="3.3" y="0" width="2.4" height="9" fill="#000"/></svg>
<div class="t b" style="left:602px;top:40px;font-size:12px;letter-spacing:0.3px">More</div>

<div class="t b" style="left:11px;top:75px;font-size:12px;letter-spacing:0.3px">Period</div>
<div class="abs" style="left:60px;top:71px;width:140px;height:19px;border:1px solid #7d7d7d;background:#f7f7f7"></div>
<div class="t" style="left:63px;top:75.5px;font-size:11.5px;letter-spacing:0.35px;color:#2a2020">Feb-2006 (Open)</div>
<div class="abs" style="left:201px;top:74px;width:11px;height:15px;border:1px solid #8c8c8c;background:#efeee8;border-radius:1px"></div>
<svg class="abs" style="left:202px;top:77px" width="9" height="9" viewBox="0 0 9 9"><path d="M1 2.5L4.5 6.5L8 2.5" fill="none" stroke="#000" stroke-width="2"/></svg>
<div class="hl" style="left:0;top:104px;width:1146px;background:#c6c6bf"></div>
<div class="t b" style="left:986px;top:77px;font-size:12px;letter-spacing:0.3px">Display</div>
<div class="abs" style="left:1040px;top:73px;width:64px;height:19px;border:1px solid #7d7d7d;background:#f7f7f7"></div>
<div class="t" style="left:1043px;top:77px;font-size:12px;color:#2a2020">0</div>
<div class="abs" style="left:1105px;top:76px;width:11px;height:15px;border:1px solid #8c8c8c;background:#efeee8;border-radius:1px"></div>
<svg class="abs" style="left:1106px;top:79px" width="9" height="9" viewBox="0 0 9 9"><path d="M1 2.5L4.5 6.5L8 2.5" fill="none" stroke="#000" stroke-width="2"/></svg>

<svg class="abs" style="left:8px;top:120px" width="8" height="5"><polygon points="0,0 7.5,0 3.75,4" fill="#111"/></svg>
<div class="abs" style="left:20px;top:114px;width:31px;height:17px;border:1px solid #8a8a8a;background:#f7f7f7"></div>
<div class="t" style="left:24px;top:117px;font-size:12px;color:#2a2020">1</div>
<svg class="abs" style="left:37px;top:120px" width="10" height="6"><path d="M0.5 0.5L4.8 5L9 0.5" fill="none" stroke="#999" stroke-width="1"/></svg>
<div class="t" style="left:60px;top:116px;font-size:12px;color:#603050">|</div>
<div class="t b" style="left:72px;top:117px;font-size:12px;letter-spacing:0.3px">Chart</div>
<div class="t" style="left:108px;top:117px;font-size:12px;color:#1020e0;letter-spacing:0.4px">= 1</div>
<div class="t" style="left:140px;top:116px;font-size:12px;color:#1040a0">|</div>
<div class="t b" style="left:151px;top:117px;font-size:12px;letter-spacing:0.3px">Report Source</div>
<div class="t" style="left:252px;top:117px;font-size:12px;color:#1a28d8;letter-spacing:0.15px">Warehouse Tables</div>
<div class="hl" style="left:0;top:135px;width:1146px;background:#c6c6bf"></div>

<svg class="abs" style="left:9px;top:139px" width="18" height="18" viewBox="0 0 18 18">
<g transform="translate(9,9)">
<g fill="#4a78c0"><rect x="-1.8" y="-8" width="3.6" height="4" transform="rotate(0)"/><rect x="-1.8" y="-8" width="3.6" height="4" transform="rotate(45)"/><rect x="-1.8" y="-8" width="3.6" height="4" transform="rotate(90)"/><rect x="-1.8" y="-8" width="3.6" height="4" transform="rotate(135)"/><rect x="-1.8" y="-8" width="3.6" height="4" transform="rotate(180)"/><rect x="-1.8" y="-8" width="3.6" height="4" transform="rotate(225)"/><rect x="-1.8" y="-8" width="3.6" height="4" transform="rotate(270)"/><rect x="-1.8" y="-8" width="3.6" height="4" transform="rotate(315)"/><circle r="6"/></g>
<g fill="#b4caec" transform="scale(0.78)"><rect x="-1.8" y="-8" width="3.6" height="4" transform="rotate(0)"/><rect x="-1.8" y="-8" width="3.6" height="4" transform="rotate(45)"/><rect x="-1.8" y="-8" width="3.6" height="4" transform="rotate(90)"/><rect x="-1.8" y="-8" width="3.6" height="4" transform="rotate(135)"/><rect x="-1.8" y="-8" width="3.6" height="4" transform="rotate(180)"/><rect x="-1.8" y="-8" width="3.6" height="4" transform="rotate(225)"/><rect x="-1.8" y="-8" width="3.6" height="4" transform="rotate(270)"/><rect x="-1.8" y="-8" width="3.6" height="4" transform="rotate(315)"/><circle r="6"/></g>
<circle r="2.2" fill="#fff" stroke="#4a78c0" stroke-width="1"/>
</g></svg>
<div class="vl" style="left:34px;top:136px;height:25px;background:#b4b4b0"></div>
<svg class="abs" style="left:44px;top:141px" width="18" height="15" viewBox="0 0 18 15">
<path d="M0.5 1V14.5H17" fill="none" stroke="#5a5a8a" stroke-width="1"/>
<rect x="2.5" y="6.5" width="3" height="7.5" fill="#7ab4e8" stroke="#2a78c8" stroke-width="1"/>
<rect x="7.5" y="3.5" width="3" height="10.5" fill="#f4c890" stroke="#e02a20" stroke-width="1"/>
<rect x="12.5" y="0.5" width="3" height="13.5" fill="#c8f0b0" stroke="#1a8a3a" stroke-width="1"/>
</svg>
<div class="vl" style="left:68px;top:136px;height:25px;background:#b4b4b0"></div>
<div class="hl" style="left:0;top:161px;width:1146px;background:#a9ada4"></div>
<div class="hl" style="left:0;top:165px;width:941px;background:#ebeadc"></div>

<div class="abs" style="left:1px;top:166px;width:940px;height:11px;background:#f1f1f1"></div>
<div class="abs" style="left:1px;top:177px;width:940px;height:15px;background:#d9d9e6"></div>
<div class="hl" style="left:1px;top:192px;width:940px;background:#8e9898"></div>
<div class="vl" style="left:49px;top:166px;height:26px;background:#8e9494"></div>
<div class="vl" style="left:112px;top:166px;height:26px;background:#8e9494"></div>
<div class="vl" style="left:365px;top:166px;height:26px;background:#8e9494"></div>
<div class="vl" style="left:478px;top:166px;height:26px;background:#8e9494"></div>
<div class="vl" style="left:591px;top:166px;height:26px;background:#8e9494"></div>
<div class="vl" style="left:704px;top:166px;height:26px;background:#8e9494"></div>
<div class="vl" style="left:817px;top:166px;height:26px;background:#8e9494"></div>
<div class="t b" style="left:5px;top:175px;font-size:11px;letter-spacing:0.35px">Chart</div>
<div class="t b" style="left:53px;top:175px;font-size:11px;letter-spacing:0.35px">Acct</div>
<div class="t b" style="left:116px;top:175px;font-size:11px;letter-spacing:0.35px">Title</div>
<div class="t b num" style="right:682.4px;top:169px;font-size:11px;letter-spacing:0.85px">Feb-2006</div>
<div class="t b num" style="right:682.7px;top:181px;font-size:11px;letter-spacing:0.55px">Debit</div>
<div class="t b num" style="right:569.4px;top:169px;font-size:11px;letter-spacing:0.85px">Feb-2006</div>
<div class="t b num" style="right:569.7px;top:181px;font-size:11px;letter-spacing:0.55px">Credit</div>
<div class="t b num" style="right:456.4px;top:169px;font-size:11px;letter-spacing:0.85px">Feb-2006</div>
<div class="t b num" style="right:456.7px;top:181px;font-size:11px;letter-spacing:0.55px">Period Net</div>
<div class="t b num" style="right:343.4px;top:169px;font-size:11px;letter-spacing:0.85px">Feb-2006</div>
<div class="t b num" style="right:343.7px;top:181px;font-size:11px;letter-spacing:0.55px">Current Year</div>
<div class="t b num" style="right:219.4px;top:169px;font-size:11px;letter-spacing:0.85px">Feb-2006</div>
<div class="t b num" style="right:219.7px;top:181px;font-size:11px;letter-spacing:0.55px">Prior Year</div>
<div class="t b" style="left:8px;top:199px;font-size:12px;letter-spacing:0.12px">Assets</div>
<div class="hl" style="left:1px;top:211px;width:940px;background:#ebebe0"></div>
<div class="vl" style="left:49px;top:211px;height:16px;background:#ebebe0"></div>
<div class="vl" style="left:112px;top:211px;height:16px;background:#ebebe0"></div>
<div class="vl" style="left:365px;top:211px;height:16px;background:#ebebe0"></div>
<div class="vl" style="left:478px;top:211px;height:16px;background:#ebebe0"></div>
<div class="vl" style="left:591px;top:211px;height:16px;background:#ebebe0"></div>
<div class="vl" style="left:704px;top:211px;height:16px;background:#ebebe0"></div>
<div class="vl" style="left:817px;top:211px;height:16px;background:#ebebe0"></div>
<div class="vl" style="left:941px;top:211px;height:16px;background:#ebebe0"></div>
<div class="t" style="left:6px;top:215px;font-size:11px">1</div>
<div class="t" style="left:59px;top:215px;font-size:11px;color:#0c0cf8;letter-spacing:0.75px">1000</div>
<div class="t" style="left:117px;top:215px;font-size:11px;letter-spacing:0.55px">CASH &amp; TEMPORARY INVESTMENTS</div>
<div class="t num" style="right:683.5px;top:215px;font-size:11px;letter-spacing:0.93px">58,445,756</div>
<div class="t num" style="right:570.5px;top:215px;font-size:11px;letter-spacing:0.93px">58,531,434</div>
<div class="t num" style="right:457.5px;top:215px;font-size:11px;letter-spacing:0.93px">-85,677</div>
<div class="t num" style="right:344.5px;top:215px;font-size:11px;letter-spacing:0.93px">62,407,821</div>
<div class="t num" style="right:220.5px;top:215px;font-size:11px;letter-spacing:0.93px">59,521,930</div>
<div class="hl" style="left:1px;top:227px;width:940px;background:#ebebe0"></div>
<div class="vl" style="left:49px;top:227px;height:16px;background:#ebebe0"></div>
<div class="vl" style="left:112px;top:227px;height:16px;background:#ebebe0"></div>
<div class="vl" style="left:365px;top:227px;height:16px;background:#ebebe0"></div>
<div class="vl" style="left:478px;top:227px;height:16px;background:#ebebe0"></div>
<div class="vl" style="left:591px;top:227px;height:16px;background:#ebebe0"></div>
<div class="vl" style="left:704px;top:227px;height:16px;background:#ebebe0"></div>
<div class="vl" style="left:817px;top:227px;height:16px;background:#ebebe0"></div>
<div class="vl" style="left:941px;top:227px;height:16px;background:#ebebe0"></div>
<div class="t" style="left:6px;top:231px;font-size:11px">1</div>
<div class="t" style="left:59px;top:231px;font-size:11px;color:#0c0cf8;letter-spacing:0.75px">1400</div>
<div class="t" style="left:117px;top:231px;font-size:11px;letter-spacing:0.13px">ACCOUNTS RECEIVABLE</div>
<div class="t num" style="right:683.5px;top:231px;font-size:11px;letter-spacing:0.93px">2,416,597</div>
<div class="t num" style="right:570.5px;top:231px;font-size:11px;letter-spacing:0.93px">3,531,027</div>
<div class="t num" style="right:457.5px;top:231px;font-size:11px;letter-spacing:0.93px">-1,114,430</div>
<div class="t num" style="right:344.5px;top:231px;font-size:11px;letter-spacing:0.93px">4,501,189</div>
<div class="t num" style="right:220.5px;top:231px;font-size:11px;letter-spacing:0.93px">1,752,918</div>
<div class="hl" style="left:1px;top:243px;width:940px;background:#ebebe0"></div>
<div class="vl" style="left:49px;top:243px;height:16px;background:#ebebe0"></div>
<div class="vl" style="left:112px;top:243px;height:16px;background:#ebebe0"></div>
<div class="vl" style="left:365px;top:243px;height:16px;background:#ebebe0"></div>
<div class="vl" style="left:478px;top:243px;height:16px;background:#ebebe0"></div>
<div class="vl" style="left:591px;top:243px;height:16px;background:#ebebe0"></div>
<div class="vl" style="left:704px;top:243px;height:16px;background:#ebebe0"></div>
<div class="vl" style="left:817px;top:243px;height:16px;background:#ebebe0"></div>
<div class="vl" style="left:941px;top:243px;height:16px;background:#ebebe0"></div>
<div class="t" style="left:6px;top:247px;font-size:11px">1</div>
<div class="t" style="left:59px;top:247px;font-size:11px;color:#0c0cf8;letter-spacing:0.75px">1500</div>
<div class="t" style="left:117px;top:247px;font-size:11px;letter-spacing:0.13px">INVENTORIES</div>
<div class="t num" style="right:683.5px;top:247px;font-size:11px;letter-spacing:0.93px">318,898</div>
<div class="t num" style="right:570.5px;top:247px;font-size:11px;letter-spacing:0.93px">147,127</div>
<div class="t num" style="right:457.5px;top:247px;font-size:11px;letter-spacing:0.93px">171,771</div>
<div class="t num" style="right:344.5px;top:247px;font-size:11px;letter-spacing:0.93px">1,178,795</div>
<div class="t num" style="right:220.5px;top:247px;font-size:11px;letter-spacing:0.93px">1,116,728</div>
<div class="hl" style="left:1px;top:259px;width:940px;background:#ebebe0"></div>
<div class="vl" style="left:49px;top:259px;height:16px;background:#ebebe0"></div>
<div class="vl" style="left:112px;top:259px;height:16px;background:#ebebe0"></div>
<div class="vl" style="left:365px;top:259px;height:16px;background:#ebebe0"></div>
<div class="vl" style="left:478px;top:259px;height:16px;background:#ebebe0"></div>
<div class="vl" style="left:591px;top:259px;height:16px;background:#ebebe0"></div>
<div class="vl" style="left:704px;top:259px;height:16px;background:#ebebe0"></div>
<div class="vl" style="left:817px;top:259px;height:16px;background:#ebebe0"></div>
<div class="vl" style="left:941px;top:259px;height:16px;background:#ebebe0"></div>
<div class="t" style="left:6px;top:263px;font-size:11px">1</div>
<div class="t" style="left:59px;top:263px;font-size:11px;color:#0c0cf8;letter-spacing:0.75px">1600</div>
<div class="t" style="left:117px;top:263px;font-size:11px;letter-spacing:0.13px">PREPAID EXPENSES</div>
<div class="t num" style="right:683.5px;top:263px;font-size:11px;letter-spacing:0.93px">136,088</div>
<div class="t num" style="right:570.5px;top:263px;font-size:11px;letter-spacing:0.93px">376,401</div>
<div class="t num" style="right:457.5px;top:263px;font-size:11px;letter-spacing:0.93px">-240,313</div>
<div class="t num" style="right:344.5px;top:263px;font-size:11px;letter-spacing:0.93px">803,990</div>
<div class="t num" style="right:220.5px;top:263px;font-size:11px;letter-spacing:0.93px">783,942</div>
<div class="hl" style="left:1px;top:275px;width:940px;background:#ebebe0"></div>
<div class="vl" style="left:49px;top:275px;height:16px;background:#ebebe0"></div>
<div class="vl" style="left:112px;top:275px;height:16px;background:#ebebe0"></div>
<div class="vl" style="left:365px;top:275px;height:16px;background:#ebebe0"></div>
<div class="vl" style="left:478px;top:275px;height:16px;background:#ebebe0"></div>
<div class="vl" style="left:591px;top:275px;height:16px;background:#ebebe0"></div>
<div class="vl" style="left:704px;top:275px;height:16px;background:#ebebe0"></div>
<div class="vl" style="left:817px;top:275px;height:16px;background:#ebebe0"></div>
<div class="vl" style="left:941px;top:275px;height:16px;background:#ebebe0"></div>
<div class="t" style="left:6px;top:279px;font-size:11px">1</div>
<div class="t" style="left:59px;top:279px;font-size:11px;color:#0c0cf8;letter-spacing:0.75px">1700</div>
<div class="t" style="left:117px;top:279px;font-size:11px;letter-spacing:0.13px">FIXED ASSETS</div>
<div class="t num" style="right:683.5px;top:279px;font-size:11px;letter-spacing:0.93px">3,119,037</div>
<div class="t num" style="right:570.5px;top:279px;font-size:11px;letter-spacing:0.93px">11,602</div>
<div class="t num" style="right:457.5px;top:279px;font-size:11px;letter-spacing:0.93px">3,107,436</div>
<div class="t num" style="right:344.5px;top:279px;font-size:11px;letter-spacing:0.93px">198,459,640</div>
<div class="t num" style="right:220.5px;top:279px;font-size:11px;letter-spacing:0.93px">189,654,973</div>
<div class="hl" style="left:1px;top:291px;width:940px;background:#ebebe0"></div>
<div class="vl" style="left:49px;top:291px;height:16px;background:#ebebe0"></div>
<div class="vl" style="left:112px;top:291px;height:16px;background:#ebebe0"></div>
<div class="vl" style="left:365px;top:291px;height:16px;background:#ebebe0"></div>
<div class="vl" style="left:478px;top:291px;height:16px;background:#ebebe0"></div>
<div class="vl" style="left:591px;top:291px;height:16px;background:#ebebe0"></div>
<div class="vl" style="left:704px;top:291px;height:16px;background:#ebebe0"></div>
<div class="vl" style="left:817px;top:291px;height:16px;background:#ebebe0"></div>
<div class="vl" style="left:941px;top:291px;height:16px;background:#ebebe0"></div>
<div class="t" style="left:6px;top:295px;font-size:11px">1</div>
<div class="t" style="left:59px;top:295px;font-size:11px;color:#0c0cf8;letter-spacing:0.75px">1900</div>
<div class="t" style="left:117px;top:295px;font-size:11px;letter-spacing:0.13px">UNAMORTIZED DEBT DISC/DEBT ISSUE</div>
<div class="t num" style="right:683.5px;top:295px;font-size:11px;letter-spacing:0.93px">0</div>
<div class="t num" style="right:570.5px;top:295px;font-size:11px;letter-spacing:0.93px">0</div>
<div class="t num" style="right:457.5px;top:295px;font-size:11px;letter-spacing:0.93px">0</div>
<div class="t num" style="right:344.5px;top:295px;font-size:11px;letter-spacing:0.93px">57,115</div>
<div class="t num" style="right:220.5px;top:295px;font-size:11px;letter-spacing:0.93px">62,121</div>
<div class="hl" style="left:1px;top:307px;width:940px;background:#ebebe0"></div>
<div class="abs" style="left:1px;top:320px;width:940px;height:7px;background:#dbdbe7"></div>
<div class="vl" style="left:49px;top:307px;height:20px;background:#ebebe0"></div>
<div class="vl" style="left:112px;top:307px;height:20px;background:#ebebe0"></div>
<div class="vl" style="left:365px;top:307px;height:20px;background:#ebebe0"></div>
<div class="vl" style="left:478px;top:307px;height:20px;background:#ebebe0"></div>
<div class="vl" style="left:591px;top:307px;height:20px;background:#ebebe0"></div>
<div class="vl" style="left:704px;top:307px;height:20px;background:#ebebe0"></div>
<div class="vl" style="left:817px;top:307px;height:20px;background:#ebebe0"></div>
<div class="vl" style="left:941px;top:307px;height:20px;background:#ebebe0"></div>
<div class="t b" style="left:117px;top:313px;font-size:11px;letter-spacing:0.45px">Total Assets</div>
<div class="t b num" style="right:682.8px;top:313px;font-size:11px;letter-spacing:1.1px">64,436,377</div>
<div class="t b num" style="right:569.8px;top:313px;font-size:11px;letter-spacing:1.1px">62,597,590</div>
<div class="t b num" style="right:456.8px;top:313px;font-size:11px;letter-spacing:1.1px">1,838,787</div>
<div class="t b num" style="right:343.8px;top:313px;font-size:11px;letter-spacing:1.1px">267,408,552</div>
<div class="t b num" style="right:219.8px;top:313px;font-size:11px;letter-spacing:1.1px">249,125,345</div>
<div class="t b" style="left:8px;top:339px;font-size:12px;letter-spacing:0.12px">Liabilities</div>
<div class="hl" style="left:1px;top:351px;width:940px;background:#ebebe0"></div>
<div class="vl" style="left:49px;top:351px;height:16px;background:#ebebe0"></div>
<div class="vl" style="left:112px;top:351px;height:16px;background:#ebebe0"></div>
<div class="vl" style="left:365px;top:351px;height:16px;background:#ebebe0"></div>
<div class="vl" style="left:478px;top:351px;height:16px;background:#ebebe0"></div>
<div class="vl" style="left:591px;top:351px;height:16px;background:#ebebe0"></div>
<div class="vl" style="left:704px;top:351px;height:16px;background:#ebebe0"></div>
<div class="vl" style="left:817px;top:351px;height:16px;background:#ebebe0"></div>
<div class="vl" style="left:941px;top:351px;height:16px;background:#ebebe0"></div>
<div class="t" style="left:6px;top:355px;font-size:11px">1</div>
<div class="t" style="left:59px;top:355px;font-size:11px;color:#0c0cf8;letter-spacing:0.75px">2000</div>
<div class="t" style="left:117px;top:355px;font-size:11px;letter-spacing:0.13px">ACCTS PAYABLE/ACCRUED LIABILITIES</div>
<div class="t num" style="right:683.5px;top:355px;font-size:11px;letter-spacing:0.93px">9,298,963</div>
<div class="t num" style="right:570.5px;top:355px;font-size:11px;letter-spacing:0.93px">10,731,576</div>
<div class="t num" style="right:457.5px;top:355px;font-size:11px;letter-spacing:0.93px">1,432,613</div>
<div class="t num" style="right:344.5px;top:355px;font-size:11px;letter-spacing:0.93px">9,800,710</div>
<div class="t num" style="right:220.5px;top:355px;font-size:11px;letter-spacing:0.93px">4,408,930</div>
<div class="hl" style="left:1px;top:367px;width:940px;background:#ebebe0"></div>
<div class="vl" style="left:49px;top:367px;height:16px;background:#ebebe0"></div>
<div class="vl" style="left:112px;top:367px;height:16px;background:#ebebe0"></div>
<div class="vl" style="left:365px;top:367px;height:16px;background:#ebebe0"></div>
<div class="vl" style="left:478px;top:367px;height:16px;background:#ebebe0"></div>
<div class="vl" style="left:591px;top:367px;height:16px;background:#ebebe0"></div>
<div class="vl" style="left:704px;top:367px;height:16px;background:#ebebe0"></div>
<div class="vl" style="left:817px;top:367px;height:16px;background:#ebebe0"></div>
<div class="vl" style="left:941px;top:367px;height:16px;background:#ebebe0"></div>
<div class="t" style="left:6px;top:371px;font-size:11px">1</div>
<div class="t" style="left:59px;top:371px;font-size:11px;color:#0c0cf8;letter-spacing:0.75px">2550</div>
<div class="t" style="left:117px;top:371px;font-size:11px;letter-spacing:0.55px">Premium</div>
<div class="t num" style="right:683.5px;top:371px;font-size:11px;letter-spacing:0.93px">0</div>
<div class="t num" style="right:570.5px;top:371px;font-size:11px;letter-spacing:0.93px">0</div>
<div class="t num" style="right:457.5px;top:371px;font-size:11px;letter-spacing:0.93px">0</div>
<div class="t num" style="right:344.5px;top:371px;font-size:11px;letter-spacing:0.93px">95,742</div>
<div class="t num" style="right:220.5px;top:371px;font-size:11px;letter-spacing:0.93px">104,952</div>
<div class="hl" style="left:1px;top:383px;width:940px;background:#ebebe0"></div>
<div class="vl" style="left:49px;top:383px;height:16px;background:#ebebe0"></div>
<div class="vl" style="left:112px;top:383px;height:16px;background:#ebebe0"></div>
<div class="vl" style="left:365px;top:383px;height:16px;background:#ebebe0"></div>
<div class="vl" style="left:478px;top:383px;height:16px;background:#ebebe0"></div>
<div class="vl" style="left:591px;top:383px;height:16px;background:#ebebe0"></div>
<div class="vl" style="left:704px;top:383px;height:16px;background:#ebebe0"></div>
<div class="vl" style="left:817px;top:383px;height:16px;background:#ebebe0"></div>
<div class="vl" style="left:941px;top:383px;height:16px;background:#ebebe0"></div>
<div class="t" style="left:6px;top:387px;font-size:11px">1</div>
<div class="t" style="left:59px;top:387px;font-size:11px;color:#0c0cf8;letter-spacing:0.75px">2690</div>
<div class="t" style="left:117px;top:387px;font-size:11px;letter-spacing:0.13px">UNEARNED REVENUE</div>
<div class="t num" style="right:683.5px;top:387px;font-size:11px;letter-spacing:0.93px">444</div>
<div class="t num" style="right:570.5px;top:387px;font-size:11px;letter-spacing:0.93px">0</div>
<div class="t num" style="right:457.5px;top:387px;font-size:11px;letter-spacing:0.93px">-444</div>
<div class="t num" style="right:344.5px;top:387px;font-size:11px;letter-spacing:0.93px">183,063</div>
<div class="t num" style="right:220.5px;top:387px;font-size:11px;letter-spacing:0.93px">120,612</div>
<div class="hl" style="left:1px;top:399px;width:940px;background:#ebebe0"></div>
<div class="vl" style="left:49px;top:399px;height:16px;background:#ebebe0"></div>
<div class="vl" style="left:112px;top:399px;height:16px;background:#ebebe0"></div>
<div class="vl" style="left:365px;top:399px;height:16px;background:#ebebe0"></div>
<div class="vl" style="left:478px;top:399px;height:16px;background:#ebebe0"></div>
<div class="vl" style="left:591px;top:399px;height:16px;background:#ebebe0"></div>
<div class="vl" style="left:704px;top:399px;height:16px;background:#ebebe0"></div>
<div class="vl" style="left:817px;top:399px;height:16px;background:#ebebe0"></div>
<div class="vl" style="left:941px;top:399px;height:16px;background:#ebebe0"></div>
<div class="t" style="left:6px;top:403px;font-size:11px">1</div>
<div class="t" style="left:59px;top:403px;font-size:11px;color:#0c0cf8;letter-spacing:0.75px">2700</div>
<div class="t" style="left:117px;top:403px;font-size:11px;letter-spacing:0.13px">LONG-TERM LIABILITIES</div>
<div class="t num" style="right:683.5px;top:403px;font-size:11px;letter-spacing:0.93px">0</div>
<div class="t num" style="right:570.5px;top:403px;font-size:11px;letter-spacing:0.93px">0</div>
<div class="t num" style="right:457.5px;top:403px;font-size:11px;letter-spacing:0.93px">0</div>
<div class="t num" style="right:344.5px;top:403px;font-size:11px;letter-spacing:0.93px">9,509,728</div>
<div class="t num" style="right:220.5px;top:403px;font-size:11px;letter-spacing:0.93px">10,240,610</div>
<div class="hl" style="left:1px;top:415px;width:940px;background:#ebebe0"></div>
<div class="abs" style="left:1px;top:428px;width:940px;height:7px;background:#dbdbe7"></div>
<div class="vl" style="left:49px;top:415px;height:20px;background:#ebebe0"></div>
<div class="vl" style="left:112px;top:415px;height:20px;background:#ebebe0"></div>
<div class="vl" style="left:365px;top:415px;height:20px;background:#ebebe0"></div>
<div class="vl" style="left:478px;top:415px;height:20px;background:#ebebe0"></div>
<div class="vl" style="left:591px;top:415px;height:20px;background:#ebebe0"></div>
<div class="vl" style="left:704px;top:415px;height:20px;background:#ebebe0"></div>
<div class="vl" style="left:817px;top:415px;height:20px;background:#ebebe0"></div>
<div class="vl" style="left:941px;top:415px;height:20px;background:#ebebe0"></div>
<div class="t b" style="left:117px;top:421px;font-size:11px;letter-spacing:0.45px">Total Liabilities</div>
<div class="t b num" style="right:682.8px;top:421px;font-size:11px;letter-spacing:1.1px">9,299,407</div>
<div class="t b num" style="right:569.8px;top:421px;font-size:11px;letter-spacing:1.1px">10,731,576</div>
<div class="t b num" style="right:456.8px;top:421px;font-size:11px;letter-spacing:1.1px">1,432,169</div>
<div class="t b num" style="right:343.8px;top:421px;font-size:11px;letter-spacing:1.1px">19,589,242</div>
<div class="t b num" style="right:219.8px;top:421px;font-size:11px;letter-spacing:1.1px">14,875,104</div>
<div class="t b" style="left:8px;top:442px;font-size:12px;letter-spacing:0.12px">Control Accounts</div>
<div class="hl" style="left:1px;top:454px;width:940px;background:#ebebe0"></div>
<div class="vl" style="left:49px;top:454px;height:16px;background:#ebebe0"></div>
<div class="vl" style="left:112px;top:454px;height:16px;background:#ebebe0"></div>
<div class="vl" style="left:365px;top:454px;height:16px;background:#ebebe0"></div>
<div class="vl" style="left:478px;top:454px;height:16px;background:#ebebe0"></div>
<div class="vl" style="left:591px;top:454px;height:16px;background:#ebebe0"></div>
<div class="vl" style="left:704px;top:454px;height:16px;background:#ebebe0"></div>
<div class="vl" style="left:817px;top:454px;height:16px;background:#ebebe0"></div>
<div class="vl" style="left:941px;top:454px;height:16px;background:#ebebe0"></div>
<div class="t" style="left:6px;top:458px;font-size:11px">1</div>
<div class="t" style="left:59px;top:458px;font-size:11px;color:#0c0cf8;letter-spacing:0.75px">3000</div>
<div class="t" style="left:117px;top:458px;font-size:11px;letter-spacing:0.55px">Control Accounts</div>
<div class="t num" style="right:683.5px;top:458px;font-size:11px;letter-spacing:0.93px">26,181,207</div>
<div class="t num" style="right:570.5px;top:458px;font-size:11px;letter-spacing:0.93px">23,480,390</div>
<div class="t num" style="right:457.5px;top:458px;font-size:11px;letter-spacing:0.93px">-2,700,818</div>
<div class="t num" style="right:344.5px;top:458px;font-size:11px;letter-spacing:0.93px">4,073,729</div>
<div class="t num" style="right:220.5px;top:458px;font-size:11px;letter-spacing:0.93px">3,539,447</div>
<div class="hl" style="left:1px;top:470px;width:940px;background:#ebebe0"></div>
<div class="abs" style="left:1px;top:483px;width:940px;height:7px;background:#dbdbe7"></div>
<div class="vl" style="left:49px;top:470px;height:20px;background:#ebebe0"></div>
<div class="vl" style="left:112px;top:470px;height:20px;background:#ebebe0"></div>
<div class="vl" style="left:365px;top:470px;height:20px;background:#ebebe0"></div>
<div class="vl" style="left:478px;top:470px;height:20px;background:#ebebe0"></div>
<div class="vl" style="left:591px;top:470px;height:20px;background:#ebebe0"></div>
<div class="vl" style="left:704px;top:470px;height:20px;background:#ebebe0"></div>
<div class="vl" style="left:817px;top:470px;height:20px;background:#ebebe0"></div>
<div class="vl" style="left:941px;top:470px;height:20px;background:#ebebe0"></div>
<div class="t b" style="left:117px;top:476px;font-size:11px;letter-spacing:0.45px">Total Control Accounts</div>
<div class="t b num" style="right:682.8px;top:476px;font-size:11px;letter-spacing:1.1px">26,181,207</div>
<div class="t b num" style="right:569.8px;top:476px;font-size:11px;letter-spacing:1.1px">23,480,390</div>
<div class="t b num" style="right:456.8px;top:476px;font-size:11px;letter-spacing:1.1px">-2,700,818</div>
<div class="t b num" style="right:343.8px;top:476px;font-size:11px;letter-spacing:1.1px">4,073,729</div>
<div class="t b num" style="right:219.8px;top:476px;font-size:11px;letter-spacing:1.1px">3,539,447</div>
<div class="t b" style="left:8px;top:496px;font-size:12px;letter-spacing:0.12px">Fund Balance</div>
<div class="hl" style="left:1px;top:509px;width:940px;background:#ebebe0"></div>
<div class="vl" style="left:49px;top:509px;height:16px;background:#ebebe0"></div>
<div class="vl" style="left:112px;top:509px;height:16px;background:#ebebe0"></div>
<div class="vl" style="left:365px;top:509px;height:16px;background:#ebebe0"></div>
<div class="vl" style="left:478px;top:509px;height:16px;background:#ebebe0"></div>
<div class="vl" style="left:591px;top:509px;height:16px;background:#ebebe0"></div>
<div class="vl" style="left:704px;top:509px;height:16px;background:#ebebe0"></div>
<div class="vl" style="left:817px;top:509px;height:16px;background:#ebebe0"></div>
<div class="vl" style="left:941px;top:509px;height:16px;background:#ebebe0"></div>
<div class="t" style="left:6px;top:513px;font-size:11px">1</div>
<div class="t" style="left:59px;top:513px;font-size:11px;color:#0c0cf8;letter-spacing:0.75px">4000</div>
<div class="t" style="left:117px;top:513px;font-size:11px;letter-spacing:0.13px">FUND BALANCE</div>
<div class="t num" style="right:683.5px;top:513px;font-size:11px;letter-spacing:0.93px">0</div>
<div class="t num" style="right:570.5px;top:513px;font-size:11px;letter-spacing:0.93px">0</div>
<div class="t num" style="right:457.5px;top:513px;font-size:11px;letter-spacing:0.93px">0</div>
<div class="t num" style="right:344.5px;top:513px;font-size:11px;letter-spacing:0.93px">37,343,038</div>
<div class="t num" style="right:220.5px;top:513px;font-size:11px;letter-spacing:0.93px">42,559,902</div>
<div class="hl" style="left:1px;top:525px;width:940px;background:#ebebe0"></div>
<div class="vl" style="left:49px;top:525px;height:16px;background:#ebebe0"></div>
<div class="vl" style="left:112px;top:525px;height:16px;background:#ebebe0"></div>
<div class="vl" style="left:365px;top:525px;height:16px;background:#ebebe0"></div>
<div class="vl" style="left:478px;top:525px;height:16px;background:#ebebe0"></div>
<div class="vl" style="left:591px;top:525px;height:16px;background:#ebebe0"></div>
<div class="vl" style="left:704px;top:525px;height:16px;background:#ebebe0"></div>
<div class="vl" style="left:817px;top:525px;height:16px;background:#ebebe0"></div>
<div class="vl" style="left:941px;top:525px;height:16px;background:#ebebe0"></div>
<div class="t" style="left:6px;top:529px;font-size:11px">1</div>
<div class="t" style="left:59px;top:529px;font-size:11px;color:#0c0cf8;letter-spacing:0.75px">4600</div>
<div class="t" style="left:117px;top:529px;font-size:11px;letter-spacing:0.55px">Equity in Capital Assets</div>
<div class="t num" style="right:683.5px;top:529px;font-size:11px;letter-spacing:0.93px">11,602</div>
<div class="t num" style="right:570.5px;top:529px;font-size:11px;letter-spacing:0.93px">3,119,037</div>
<div class="t num" style="right:457.5px;top:529px;font-size:11px;letter-spacing:0.93px">3,107,436</div>
<div class="t num" style="right:344.5px;top:529px;font-size:11px;letter-spacing:0.93px">206,414,797</div>
<div class="t num" style="right:220.5px;top:529px;font-size:11px;letter-spacing:0.93px">188,191,403</div>
<div class="hl" style="left:1px;top:541px;width:940px;background:#ebebe0"></div>
<div class="abs" style="left:1px;top:554px;width:940px;height:7px;background:#dbdbe7"></div>
<div class="vl" style="left:49px;top:541px;height:20px;background:#ebebe0"></div>
<div class="vl" style="left:112px;top:541px;height:20px;background:#ebebe0"></div>
<div class="vl" style="left:365px;top:541px;height:20px;background:#ebebe0"></div>
<div class="vl" style="left:478px;top:541px;height:20px;background:#ebebe0"></div>
<div class="vl" style="left:591px;top:541px;height:20px;background:#ebebe0"></div>
<div class="vl" style="left:704px;top:541px;height:20px;background:#ebebe0"></div>
<div class="vl" style="left:817px;top:541px;height:20px;background:#ebebe0"></div>
<div class="vl" style="left:941px;top:541px;height:20px;background:#ebebe0"></div>
<div class="t b" style="left:117px;top:547px;font-size:11px;letter-spacing:0.45px">Total Fund Balance</div>
<div class="t b num" style="right:682.8px;top:547px;font-size:11px;letter-spacing:1.1px">11,602</div>
<div class="t b num" style="right:569.8px;top:547px;font-size:11px;letter-spacing:1.1px">3,119,037</div>
<div class="t b num" style="right:456.8px;top:547px;font-size:11px;letter-spacing:1.1px">3,107,436</div>
<div class="t b num" style="right:343.8px;top:547px;font-size:11px;letter-spacing:1.1px">243,757,835</div>
<div class="t b num" style="right:219.8px;top:547px;font-size:11px;letter-spacing:1.1px">230,751,304</div>
<div class="t b" style="left:8px;top:567px;font-size:12px;letter-spacing:0.12px">Fund Deductions</div>
<div class="hl" style="left:1px;top:580px;width:940px;background:#ebebe0"></div>
<div class="vl" style="left:49px;top:580px;height:16px;background:#ebebe0"></div>
<div class="vl" style="left:112px;top:580px;height:16px;background:#ebebe0"></div>
<div class="vl" style="left:365px;top:580px;height:16px;background:#ebebe0"></div>
<div class="vl" style="left:478px;top:580px;height:16px;background:#ebebe0"></div>
<div class="vl" style="left:591px;top:580px;height:16px;background:#ebebe0"></div>
<div class="vl" style="left:704px;top:580px;height:16px;background:#ebebe0"></div>
<div class="vl" style="left:817px;top:580px;height:16px;background:#ebebe0"></div>
<div class="vl" style="left:941px;top:580px;height:16px;background:#ebebe0"></div>
<div class="t" style="left:6px;top:584px;font-size:11px">1</div>
<div class="t" style="left:59px;top:584px;font-size:11px;color:#0c0cf8;letter-spacing:0.75px">5000</div>
<div class="t" style="left:117px;top:584px;font-size:11px;letter-spacing:0.13px">FUND DEDUCTIONS</div>
<div class="t num" style="right:683.5px;top:584px;font-size:11px;letter-spacing:0.93px">0</div>
<div class="t num" style="right:570.5px;top:584px;font-size:11px;letter-spacing:0.93px">0</div>
<div class="t num" style="right:457.5px;top:584px;font-size:11px;letter-spacing:0.93px">0</div>
<div class="t num" style="right:344.5px;top:584px;font-size:11px;letter-spacing:0.93px">71,257</div>
<div class="t num" style="right:220.5px;top:584px;font-size:11px;letter-spacing:0.93px">40,517</div>
</div>
<svg class="abs" style="left:0;top:0" width="1161" height="619">
<line x1="0.5" y1="0" x2="0.5" y2="596" stroke="#1a1f45" stroke-width="1.2"/>
<line x1="0" y1="0.5" x2="1146" y2="0.5" stroke="#1a1f45" stroke-width="1.2"/>
<line x1="1145.5" y1="0" x2="1145.5" y2="594" stroke="#1a1f45" stroke-width="1.4"/>
<polyline points="0.5,596.5 1.5,593.5 2.5,591.5 3.5,589.5 4.5,587.5 5.5,585.5 6.5,582.5 7.5,580.5 8.5,578.5 9.5,576.5 10.5,575.5 11.5,575.5 12.5,575.5 13.5,576.5 14.5,575.5 15.5,575.5 16.5,576.5 17.5,576.5 18.5,577.5 19.5,576.5 20.5,577.5 21.5,577.5 22.5,577.5 23.5,577.5 24.5,576.5 25.5,576.5 26.5,576.5 27.5,576.5 28.5,577.5 29.5,578.5 30.5,579.5 31.5,580.5 32.5,581.5 33.5,581.5 34.5,581.5 35.5,582.5 36.5,583.5 37.5,584.5 38.5,585.5 39.5,585.5 40.5,586.5 41.5,586.5 42.5,587.5 43.5,588.5 44.5,588.5 45.5,589.5 46.5,588.5 47.5,588.5 48.5,587.5 49.5,586.5 50.5,586.5 51.5,585.5 52.5,585.5 53.5,585.5 54.5,585.5 55.5,585.5 56.5,584.5 57.5,584.5 58.5,585.5 59.5,585.5 60.5,585.5 61.5,585.5 62.5,585.5 63.5,585.5 64.5,585.5 65.5,585.5 66.5,585.5 67.5,586.5 68.5,585.5 69.5,585.5 70.5,585.5 71.5,585.5 72.5,585.5 73.5,585.5 74.5,586.5 75.5,585.5 76.5,585.5 77.5,585.5 78.5,585.5 79.5,585.5 80.5,585.5 81.5,584.5 82.5,584.5 83.5,585.5 84.5,585.5 85.5,585.5 86.5,585.5 87.5,586.5 88.5,586.5 89.5,586.5 90.5,586.5 91.5,587.5 92.5,588.5 93.5,588.5 94.5,588.5 95.5,588.5 96.5,588.5 97.5,589.5 98.5,590.5 99.5,589.5 100.5,589.5 101.5,587.5 102.5,585.5 103.5,584.5 104.5,583.5 105.5,581.5 106.5,579.5 107.5,578.5 108.5,578.5 109.5,578.5 110.5,578.5 111.5,579.5 112.5,579.5 113.5,579.5 114.5,579.5 115.5,578.5 116.5,578.5 117.5,579.5 118.5,579.5 119.5,579.5 120.5,579.5 121.5,578.5 122.5,578.5 123.5,578.5 124.5,577.5 125.5,577.5 126.5,576.5 127.5,576.5 128.5,576.5 129.5,575.5 130.5,575.5 131.5,576.5 132.5,578.5 133.5,579.5 134.5,581.5 135.5,583.5 136.5,585.5 137.5,587.5 138.5,589.5 139.5,591.5 140.5,593.5 141.5,591.5 142.5,590.5 143.5,589.5 144.5,587.5 145.5,585.5 146.5,585.5 147.5,585.5 148.5,585.5 149.5,585.5 150.5,585.5 151.5,585.5 152.5,585.5 153.5,585.5 154.5,585.5 155.5,585.5 156.5,585.5 157.5,585.5 158.5,585.5 159.5,586.5 160.5,586.5 161.5,587.5 162.5,586.5 163.5,586.5 164.5,586.5 165.5,586.5 166.5,586.5 167.5,587.5 168.5,587.5 169.5,586.5 170.5,587.5 171.5,587.5 172.5,588.5 173.5,588.5 174.5,588.5 175.5,588.5 176.5,588.5 177.5,588.5 178.5,588.5 179.5,587.5 180.5,586.5 181.5,586.5 182.5,586.5 183.5,586.5 184.5,587.5 185.5,586.5 186.5,587.5 187.5,587.5 188.5,588.5 189.5,587.5 190.5,587.5 191.5,586.5 192.5,586.5 193.5,585.5 194.5,585.5 195.5,586.5 196.5,586.5 197.5,586.5 198.5,586.5 199.5,586.5 200.5,585.5 201.5,585.5 202.5,586.5 203.5,586.5 204.5,586.5 205.5,585.5 206.5,584.5 207.5,584.5 208.5,584.5 209.5,584.5 210.5,584.5 211.5,584.5 212.5,583.5 213.5,584.5 214.5,584.5 215.5,583.5 216.5,582.5 217.5,581.5 218.5,582.5 219.5,582.5 220.5,581.5 221.5,581.5 222.5,582.5 223.5,582.5 224.5,581.5 225.5,581.5 226.5,580.5 227.5,579.5 228.5,580.5 229.5,580.5 230.5,580.5 231.5,580.5 232.5,580.5 233.5,580.5 234.5,580.5 235.5,579.5 236.5,579.5 237.5,579.5 238.5,578.5 239.5,578.5 240.5,578.5 241.5,578.5 242.5,579.5 243.5,580.5 244.5,581.5 245.5,582.5 246.5,583.5 247.5,585.5 248.5,585.5 249.5,587.5 250.5,588.5 251.5,587.5 252.5,587.5 253.5,585.5 254.5,585.5 255.5,584.5 256.5,583.5 257.5,583.5 258.5,582.5 259.5,582.5 260.5,582.5 261.5,581.5 262.5,580.5 263.5,581.5 264.5,582.5 265.5,583.5 266.5,583.5 267.5,583.5 268.5,584.5 269.5,584.5 270.5,585.5 271.5,586.5 272.5,586.5 273.5,587.5 274.5,588.5 275.5,588.5 276.5,589.5 277.5,588.5 278.5,588.5 279.5,588.5 280.5,588.5 281.5,588.5 282.5,588.5 283.5,589.5 284.5,589.5 285.5,589.5 286.5,589.5 287.5,589.5 288.5,589.5 289.5,589.5 290.5,589.5 291.5,589.5 292.5,588.5 293.5,588.5 294.5,587.5 295.5,587.5 296.5,586.5 297.5,587.5 298.5,587.5 299.5,587.5 300.5,587.5 301.5,587.5 302.5,587.5 303.5,587.5 304.5,587.5 305.5,587.5 306.5,587.5 307.5,587.5 308.5,587.5 309.5,587.5 310.5,587.5 311.5,587.5 312.5,587.5 313.5,586.5 314.5,586.5 315.5,586.5 316.5,585.5 317.5,585.5 318.5,585.5 319.5,585.5 320.5,585.5 321.5,585.5 322.5,584.5 323.5,584.5 324.5,585.5 325.5,585.5 326.5,584.5 327.5,585.5 328.5,586.5 329.5,586.5 330.5,586.5 331.5,586.5 332.5,585.5 333.5,587.5 334.5,587.5 335.5,588.5 336.5,589.5 337.5,591.5 338.5,592.5 339.5,593.5 340.5,593.5 341.5,595.5 342.5,596.5 343.5,596.5 344.5,596.5 345.5,595.5 346.5,596.5 347.5,596.5 348.5,595.5 349.5,596.5 350.5,596.5 351.5,597.5 352.5,596.5 353.5,597.5 354.5,596.5 355.5,597.5 356.5,597.5 357.5,597.5 358.5,597.5 359.5,597.5 360.5,597.5 361.5,596.5 362.5,597.5 363.5,596.5 364.5,596.5 365.5,596.5 366.5,596.5 367.5,596.5 368.5,596.5 369.5,596.5 370.5,597.5 371.5,596.5 372.5,595.5 373.5,594.5 374.5,593.5 375.5,592.5 376.5,591.5 377.5,590.5 378.5,590.5 379.5,589.5 380.5,588.5 381.5,588.5 382.5,588.5 383.5,586.5 384.5,586.5 385.5,585.5 386.5,585.5 387.5,585.5 388.5,584.5 389.5,584.5 390.5,583.5 391.5,583.5 392.5,582.5 393.5,583.5 394.5,583.5 395.5,583.5 396.5,583.5 397.5,582.5 398.5,582.5 399.5,581.5 400.5,581.5 401.5,581.5 402.5,581.5 403.5,580.5 404.5,580.5 405.5,581.5 406.5,581.5 407.5,581.5 408.5,581.5 409.5,581.5 410.5,581.5 411.5,581.5 412.5,580.5 413.5,580.5 414.5,580.5 415.5,581.5 416.5,581.5 417.5,581.5 418.5,581.5 419.5,581.5 420.5,581.5 421.5,582.5 422.5,582.5 423.5,583.5 424.5,584.5 425.5,585.5 426.5,586.5 427.5,587.5 428.5,588.5 429.5,589.5 430.5,589.5 431.5,589.5 432.5,589.5 433.5,589.5 434.5,589.5 435.5,589.5 436.5,589.5 437.5,589.5 438.5,590.5 439.5,590.5 440.5,591.5 441.5,591.5 442.5,591.5 443.5,589.5 444.5,587.5 445.5,585.5 446.5,583.5 447.5,581.5 448.5,579.5 449.5,579.5 450.5,580.5 451.5,580.5 452.5,580.5 453.5,580.5 454.5,580.5 455.5,580.5 456.5,579.5 457.5,580.5 458.5,580.5 459.5,580.5 460.5,580.5 461.5,581.5 462.5,581.5 463.5,581.5 464.5,580.5 465.5,579.5 466.5,579.5 467.5,579.5 468.5,578.5 469.5,579.5 470.5,579.5 471.5,579.5 472.5,579.5 473.5,579.5 474.5,579.5 475.5,579.5 476.5,579.5 477.5,579.5 478.5,579.5 479.5,579.5 480.5,580.5 481.5,579.5 482.5,579.5 483.5,578.5 484.5,577.5 485.5,577.5 486.5,577.5 487.5,576.5 488.5,578.5 489.5,579.5 490.5,580.5 491.5,581.5 492.5,581.5 493.5,583.5 494.5,584.5 495.5,585.5 496.5,586.5 497.5,585.5 498.5,585.5 499.5,585.5 500.5,585.5 501.5,585.5 502.5,585.5 503.5,585.5 504.5,585.5 505.5,585.5 506.5,585.5 507.5,586.5 508.5,586.5 509.5,586.5 510.5,586.5 511.5,586.5 512.5,587.5 513.5,586.5 514.5,587.5 515.5,587.5 516.5,588.5 517.5,588.5 518.5,588.5 519.5,588.5 520.5,588.5 521.5,587.5 522.5,586.5 523.5,584.5 524.5,582.5 525.5,581.5 526.5,581.5 527.5,581.5 528.5,581.5 529.5,581.5 530.5,581.5 531.5,581.5 532.5,581.5 533.5,581.5 534.5,581.5 535.5,581.5 536.5,581.5 537.5,581.5 538.5,581.5 539.5,580.5 540.5,580.5 541.5,580.5 542.5,580.5 543.5,580.5 544.5,579.5 545.5,579.5 546.5,579.5 547.5,579.5 548.5,579.5 549.5,580.5 550.5,581.5 551.5,581.5 552.5,582.5 553.5,583.5 554.5,584.5 555.5,584.5 556.5,584.5 557.5,584.5 558.5,584.5 559.5,584.5 560.5,584.5 561.5,584.5 562.5,584.5 563.5,583.5 564.5,582.5 565.5,583.5 566.5,583.5 567.5,583.5 568.5,583.5 569.5,583.5 570.5,583.5 571.5,582.5 572.5,582.5 573.5,584.5 574.5,587.5 575.5,589.5 576.5,590.5 577.5,592.5 578.5,595.5 579.5,595.5 580.5,595.5 581.5,594.5 582.5,594.5 583.5,594.5 584.5,595.5 585.5,595.5 586.5,594.5 587.5,594.5 588.5,595.5 589.5,593.5 590.5,592.5 591.5,591.5 592.5,590.5 593.5,589.5 594.5,589.5 595.5,587.5 596.5,586.5 597.5,585.5 598.5,584.5 599.5,584.5 600.5,583.5 601.5,582.5 602.5,582.5 603.5,582.5 604.5,582.5 605.5,581.5 606.5,582.5 607.5,582.5 608.5,582.5 609.5,581.5 610.5,580.5 611.5,579.5 612.5,579.5 613.5,579.5 614.5,579.5 615.5,579.5 616.5,580.5 617.5,581.5 618.5,582.5 619.5,582.5 620.5,582.5 621.5,582.5 622.5,583.5 623.5,583.5 624.5,583.5 625.5,583.5 626.5,583.5 627.5,583.5 628.5,583.5 629.5,583.5 630.5,583.5 631.5,583.5 632.5,584.5 633.5,585.5 634.5,585.5 635.5,586.5 636.5,588.5 637.5,589.5 638.5,590.5 639.5,590.5 640.5,590.5 641.5,590.5 642.5,590.5 643.5,589.5 644.5,589.5 645.5,587.5 646.5,586.5 647.5,586.5 648.5,586.5 649.5,586.5 650.5,585.5 651.5,583.5 652.5,580.5 653.5,581.5 654.5,582.5 655.5,584.5 656.5,585.5 657.5,587.5 658.5,588.5 659.5,590.5 660.5,591.5 661.5,592.5 662.5,592.5 663.5,592.5 664.5,592.5 665.5,592.5 666.5,592.5 667.5,591.5 668.5,590.5 669.5,590.5 670.5,589.5 671.5,589.5 672.5,589.5 673.5,587.5 674.5,586.5 675.5,585.5 676.5,584.5 677.5,582.5 678.5,581.5 679.5,581.5 680.5,581.5 681.5,581.5 682.5,582.5 683.5,582.5 684.5,583.5 685.5,583.5 686.5,583.5 687.5,583.5 688.5,584.5 689.5,585.5 690.5,585.5 691.5,586.5 692.5,586.5 693.5,587.5 694.5,588.5 695.5,588.5 696.5,589.5 697.5,590.5 698.5,589.5 699.5,589.5 700.5,589.5 701.5,589.5 702.5,590.5 703.5,589.5 704.5,590.5 705.5,590.5 706.5,591.5 707.5,590.5 708.5,591.5 709.5,591.5 710.5,592.5 711.5,591.5 712.5,591.5 713.5,592.5 714.5,591.5 715.5,592.5 716.5,592.5 717.5,592.5 718.5,592.5 719.5,592.5 720.5,592.5 721.5,593.5 722.5,593.5 723.5,593.5 724.5,592.5 725.5,593.5 726.5,593.5 727.5,592.5 728.5,592.5 729.5,592.5 730.5,592.5 731.5,593.5 732.5,593.5 733.5,594.5 734.5,594.5 735.5,594.5 736.5,593.5 737.5,593.5 738.5,594.5 739.5,593.5 740.5,593.5 741.5,593.5 742.5,593.5 743.5,592.5 744.5,592.5 745.5,591.5 746.5,591.5 747.5,591.5 748.5,592.5 749.5,591.5 750.5,592.5 751.5,592.5 752.5,592.5 753.5,592.5 754.5,592.5 755.5,592.5 756.5,592.5 757.5,592.5 758.5,592.5 759.5,592.5 760.5,592.5 761.5,591.5 762.5,590.5 763.5,588.5 764.5,587.5 765.5,587.5 766.5,586.5 767.5,585.5 768.5,583.5 769.5,582.5 770.5,581.5 771.5,581.5 772.5,582.5 773.5,582.5 774.5,582.5 775.5,582.5 776.5,583.5 777.5,583.5 778.5,582.5 779.5,583.5 780.5,583.5 781.5,582.5 782.5,582.5 783.5,582.5 784.5,583.5 785.5,583.5 786.5,584.5 787.5,583.5 788.5,583.5 789.5,583.5 790.5,583.5 791.5,585.5 792.5,585.5 793.5,585.5 794.5,586.5 795.5,587.5 796.5,588.5 797.5,588.5 798.5,589.5 799.5,590.5 800.5,591.5 801.5,593.5 802.5,595.5 803.5,594.5 804.5,593.5 805.5,592.5 806.5,592.5 807.5,591.5 808.5,590.5 809.5,590.5 810.5,589.5 811.5,588.5 812.5,587.5 813.5,586.5 814.5,585.5 815.5,586.5 816.5,586.5 817.5,586.5 818.5,585.5 819.5,584.5 820.5,583.5 821.5,583.5 822.5,583.5 823.5,582.5 824.5,582.5 825.5,581.5 826.5,581.5 827.5,581.5 828.5,581.5 829.5,581.5 830.5,581.5 831.5,580.5 832.5,580.5 833.5,579.5 834.5,579.5 835.5,578.5 836.5,578.5 837.5,578.5 838.5,577.5 839.5,577.5 840.5,576.5 841.5,577.5 842.5,577.5 843.5,577.5 844.5,576.5 845.5,577.5 846.5,577.5 847.5,576.5 848.5,576.5 849.5,577.5 850.5,577.5 851.5,576.5 852.5,576.5 853.5,576.5 854.5,577.5 855.5,577.5 856.5,576.5 857.5,576.5 858.5,575.5 859.5,575.5 860.5,576.5 861.5,576.5 862.5,576.5 863.5,578.5 864.5,580.5 865.5,581.5 866.5,582.5 867.5,584.5 868.5,587.5 869.5,586.5 870.5,586.5 871.5,586.5 872.5,586.5 873.5,586.5 874.5,585.5 875.5,585.5 876.5,585.5 877.5,585.5 878.5,585.5 879.5,585.5 880.5,585.5 881.5,584.5 882.5,584.5 883.5,584.5 884.5,583.5 885.5,583.5 886.5,583.5 887.5,583.5 888.5,582.5 889.5,582.5 890.5,581.5 891.5,582.5 892.5,582.5 893.5,582.5 894.5,582.5 895.5,582.5 896.5,583.5 897.5,583.5 898.5,583.5 899.5,584.5 900.5,584.5 901.5,584.5 902.5,584.5 903.5,584.5 904.5,585.5 905.5,585.5 906.5,585.5 907.5,585.5 908.5,585.5 909.5,585.5 910.5,585.5 911.5,586.5 912.5,586.5 913.5,586.5 914.5,586.5 915.5,587.5 916.5,587.5 917.5,586.5 918.5,586.5 919.5,586.5 920.5,587.5 921.5,587.5 922.5,587.5 923.5,587.5 924.5,587.5 925.5,587.5 926.5,587.5 927.5,587.5 928.5,587.5 929.5,587.5 930.5,585.5 931.5,584.5 932.5,584.5 933.5,583.5 934.5,582.5 935.5,580.5 936.5,580.5 937.5,579.5 938.5,578.5 939.5,576.5 940.5,576.5 941.5,575.5 942.5,576.5 943.5,576.5 944.5,576.5 945.5,576.5 946.5,576.5 947.5,575.5 948.5,575.5 949.5,576.5 950.5,576.5 951.5,577.5 952.5,578.5 953.5,579.5 954.5,580.5 955.5,581.5 956.5,582.5 957.5,583.5 958.5,585.5 959.5,585.5 960.5,585.5 961.5,586.5 962.5,586.5 963.5,586.5 964.5,587.5 965.5,587.5 966.5,587.5 967.5,588.5 968.5,588.5 969.5,588.5 970.5,589.5 971.5,588.5 972.5,587.5 973.5,586.5 974.5,585.5 975.5,584.5 976.5,583.5 977.5,582.5 978.5,581.5 979.5,580.5 980.5,580.5 981.5,579.5 982.5,578.5 983.5,578.5 984.5,578.5 985.5,577.5 986.5,577.5 987.5,577.5 988.5,577.5 989.5,577.5 990.5,577.5 991.5,576.5 992.5,577.5 993.5,577.5 994.5,577.5 995.5,578.5 996.5,579.5 997.5,578.5 998.5,579.5 999.5,579.5 1000.5,580.5 1001.5,580.5 1002.5,581.5 1003.5,582.5 1004.5,582.5 1005.5,583.5 1006.5,582.5 1007.5,583.5 1008.5,583.5 1009.5,584.5 1010.5,585.5 1011.5,584.5 1012.5,584.5 1013.5,584.5 1014.5,583.5 1015.5,582.5 1016.5,582.5 1017.5,582.5 1018.5,582.5 1019.5,582.5 1020.5,583.5 1021.5,583.5 1022.5,583.5 1023.5,584.5 1024.5,584.5 1025.5,584.5 1026.5,585.5 1027.5,585.5 1028.5,585.5 1029.5,585.5 1030.5,586.5 1031.5,587.5 1032.5,588.5 1033.5,589.5 1034.5,589.5 1035.5,590.5 1036.5,590.5 1037.5,590.5 1038.5,591.5 1039.5,591.5 1040.5,591.5 1041.5,591.5 1042.5,591.5 1043.5,592.5 1044.5,591.5 1045.5,592.5 1046.5,592.5 1047.5,592.5 1048.5,592.5 1049.5,592.5 1050.5,592.5 1051.5,591.5 1052.5,591.5 1053.5,590.5 1054.5,589.5 1055.5,588.5 1056.5,588.5 1057.5,587.5 1058.5,587.5 1059.5,586.5 1060.5,585.5 1061.5,585.5 1062.5,585.5 1063.5,584.5 1064.5,584.5 1065.5,583.5 1066.5,582.5 1067.5,581.5 1068.5,581.5 1069.5,580.5 1070.5,580.5 1071.5,580.5 1072.5,579.5 1073.5,579.5 1074.5,579.5 1075.5,578.5 1076.5,577.5 1077.5,576.5 1078.5,576.5 1079.5,575.5 1080.5,575.5 1081.5,575.5 1082.5,575.5 1083.5,575.5 1084.5,575.5 1085.5,575.5 1086.5,575.5 1087.5,575.5 1088.5,575.5 1089.5,575.5 1090.5,574.5 1091.5,576.5 1092.5,578.5 1093.5,579.5 1094.5,580.5 1095.5,581.5 1096.5,582.5 1097.5,583.5 1098.5,584.5 1099.5,584.5 1100.5,585.5 1101.5,585.5 1102.5,585.5 1103.5,586.5 1104.5,585.5 1105.5,586.5 1106.5,585.5 1107.5,585.5 1108.5,585.5 1109.5,585.5 1110.5,585.5 1111.5,585.5 1112.5,585.5 1113.5,585.5 1114.5,586.5 1115.5,585.5 1116.5,585.5 1117.5,585.5 1118.5,585.5 1119.5,585.5 1120.5,585.5 1121.5,584.5 1122.5,583.5 1123.5,583.5 1124.5,583.5 1125.5,583.5 1126.5,584.5 1127.5,584.5 1128.5,584.5 1129.5,584.5 1130.5,584.5 1131.5,584.5 1132.5,584.5 1133.5,584.5 1134.5,584.5 1135.5,584.5 1136.5,583.5 1137.5,583.5 1138.5,583.5 1139.5,583.5 1140.5,584.5 1141.5,586.5 1142.5,588.5 1143.5,590.5 1144.5,592.5 1145.5,594.5 1145.5,594.5" fill="none" stroke="#1a1f40" stroke-width="1" shape-rendering="crispEdges"/>
</svg>
<svg class="abs" style="left:0;top:0" width="1161" height="619">
<defs><filter id="cshadow" x="-20%" y="-20%" width="140%" height="140%"><feGaussianBlur stdDeviation="2"/></filter></defs>
<g transform="translate(0.6,3.6)" filter="url(#cshadow)" fill="#454545" stroke="#454545" stroke-width="10" stroke-linejoin="miter" stroke-miterlimit="12" opacity="0.62"><rect x="581" y="53" width="213" height="74" rx="30" ry="37"/><polygon points="872,21 770,64 780,95"/></g>
<g fill="#fff" stroke="#fbfbfb" stroke-width="7.6" stroke-linejoin="miter" stroke-miterlimit="12"><rect x="581" y="53" width="213" height="74" rx="30" ry="37"/><polygon points="872,21 770,64 780,95"/></g>
<g fill="#4452f4" stroke="none"><rect x="581" y="53" width="213" height="74" rx="30" ry="37"/><polygon points="872,21 770,64 780,95"/></g>
<text x="685" y="85.5" text-anchor="middle" font-family="Liberation Sans" font-size="16" fill="#fff">Last Date and Time</text>
<text x="685" y="104.0" text-anchor="middle" font-family="Liberation Sans" font-size="16" fill="#fff">of Data Refresh</text>
<g transform="translate(0.6,3.6)" filter="url(#cshadow)" fill="#454545" stroke="#454545" stroke-width="10" stroke-linejoin="miter" stroke-miterlimit="12" opacity="0.62"><rect x="259" y="151" width="151" height="120" rx="62" ry="52"/><polygon points="202,96.5 302,163 275,199.5"/></g>
<g fill="#fff" stroke="#fbfbfb" stroke-width="7.6" stroke-linejoin="miter" stroke-miterlimit="12"><rect x="259" y="151" width="151" height="120" rx="62" ry="52"/><polygon points="202,96.5 302,163 275,199.5"/></g>
<g fill="#4452f4" stroke="none"><rect x="259" y="151" width="151" height="120" rx="62" ry="52"/><polygon points="202,96.5 302,163 275,199.5"/></g>
<text x="334" y="206.8" text-anchor="middle" font-family="Liberation Sans" font-size="16" fill="#fff">Change the</text>
<text x="334" y="225.3" text-anchor="middle" font-family="Liberation Sans" font-size="16" fill="#fff">Fiscal Period</text>
<g transform="translate(0.6,3.6)" filter="url(#cshadow)" fill="#454545" stroke="#454545" stroke-width="10" stroke-linejoin="miter" stroke-miterlimit="12" opacity="0.62"><rect x="836" y="142.3" width="154" height="83.5" rx="30" ry="41.7"/><polygon points="1048,106 960,153.5 975,186.8"/></g>
<g fill="#fff" stroke="#fbfbfb" stroke-width="7.6" stroke-linejoin="miter" stroke-miterlimit="12"><rect x="836" y="142.3" width="154" height="83.5" rx="30" ry="41.7"/><polygon points="1048,106 960,153.5 975,186.8"/></g>
<g fill="#4452f4" stroke="none"><rect x="836" y="142.3" width="154" height="83.5" rx="30" ry="41.7"/><polygon points="1048,106 960,153.5 975,186.8"/></g>
<text x="912" y="172.0" text-anchor="middle" font-family="Liberation Sans" font-size="16" fill="#fff">Include or</text>
<text x="912" y="190.5" text-anchor="middle" font-family="Liberation Sans" font-size="16" fill="#fff">Exclude</text>
<text x="912" y="209.0" text-anchor="middle" font-family="Liberation Sans" font-size="16" fill="#fff">decimals</text>
<g transform="translate(0.6,3.6)" filter="url(#cshadow)" fill="#454545" stroke="#454545" stroke-width="10" stroke-linejoin="miter" stroke-miterlimit="12" opacity="0.62"><rect x="173" y="425" width="186" height="93" rx="40" ry="46"/><polygon points="102,383.1 205,436.5 185,470.2"/></g>
<g fill="#fff" stroke="#fbfbfb" stroke-width="7.6" stroke-linejoin="miter" stroke-miterlimit="12"><rect x="173" y="425" width="186" height="93" rx="40" ry="46"/><polygon points="102,383.1 205,436.5 185,470.2"/></g>
<g fill="#4452f4" stroke="none"><rect x="173" y="425" width="186" height="93" rx="40" ry="46"/><polygon points="102,383.1 205,436.5 185,470.2"/></g>
<text x="266" y="459.0" text-anchor="middle" font-family="Liberation Sans" font-size="16" fill="#fff">Drill-down to a</text>
<text x="266" y="477.5" text-anchor="middle" font-family="Liberation Sans" font-size="16" fill="#fff">specific Account</text>
<text x="266" y="496.0" text-anchor="middle" font-family="Liberation Sans" font-size="16" fill="#fff">Number</text>
</svg>
</body></html>
